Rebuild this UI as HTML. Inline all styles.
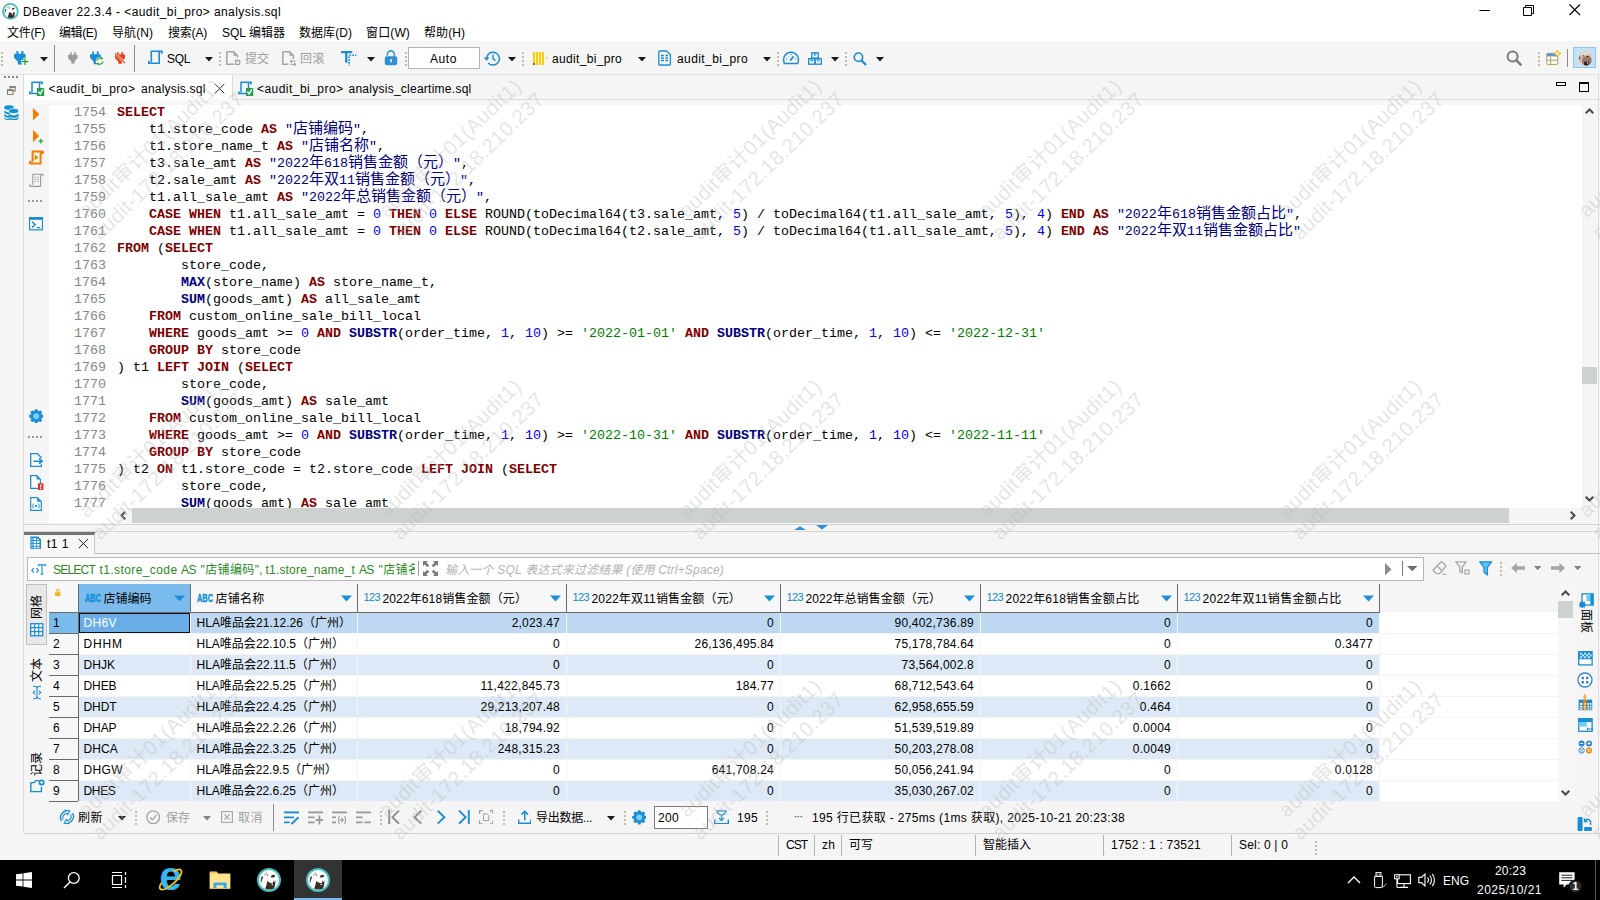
<!DOCTYPE html>
<html lang="zh"><head><meta charset="utf-8"><title>DBeaver</title>
<style>
*{box-sizing:border-box;margin:0;padding:0}
html,body{width:1600px;height:900px;overflow:hidden;background:#fff}
body{font-family:"Liberation Sans","Noto Sans CJK SC",sans-serif;font-size:12px;color:#000;position:relative}
.a{position:absolute;display:block}
.t{position:absolute;white-space:pre;line-height:20px;height:20px}
.c{position:absolute;white-space:pre;font-family:"Liberation Mono","Noto Sans CJK SC",monospace;font-size:13.333px;line-height:20px;height:20px;color:#000}
.c .cj{font-size:15px;line-height:1}
.k{color:#800000;font-weight:bold}
.f{color:#000080;font-weight:bold}
.n{color:#0000ff}
.s{color:#008000}
.q{color:#000080}
.ln{color:#868686}
.vt{width:40px;height:16px;margin-left:-20px;margin-top:-8px;line-height:16px;text-align:center;white-space:nowrap;transform:rotate(-90deg);font-size:12px}
.vtr{width:40px;height:16px;margin-left:-20px;margin-top:-8px;line-height:16px;text-align:center;white-space:nowrap;transform:rotate(90deg);font-size:12px}
.wm{position:absolute;width:300px;height:26px;line-height:26px;font-size:20.5px;text-align:center;white-space:nowrap;color:rgba(188,188,188,.4);transform:rotate(-44deg)}

</style></head>
<body>
<div class="a" style="left:0px;top:41px;width:1600px;height:33px;background:#f5f5f5;"></div>
<div class="a" style="left:0px;top:74px;width:1600px;height:1px;background:#e2e2e2;"></div>
<div class="a" style="left:0px;top:75px;width:1600px;height:785px;background:#f5f5f5;"></div>
<div class="a" style="left:24px;top:75px;width:208px;height:25px;background:#fff;"></div>
<div class="a" style="left:232px;top:99px;width:1368px;height:1px;background:#dadada;"></div>
<div class="a" style="left:23px;top:75px;width:1px;height:758px;background:#dcdcdc;"></div>
<div class="a" style="left:49px;top:105px;width:1533px;height:403px;background:#fff;"></div>
<div class="a" style="left:49px;top:508px;width:68px;height:15px;background:#fff;"></div>
<div class="a" style="left:24px;top:100px;width:1576px;height:4px;background:#f8f8f8;"></div>
<div class="a" style="left:1582px;top:104px;width:16px;height:404px;background:#f5f5f5;"></div>
<div class="a" style="left:1582px;top:367px;width:15px;height:17px;background:#cdd1cf;"></div>
<div class="a" style="left:117px;top:508px;width:1465px;height:15px;background:#f5f5f5;"></div>
<div class="a" style="left:132px;top:508px;width:1377px;height:15px;background:#cdd1cf;"></div>
<div class="a" style="left:1598px;top:75px;width:1px;height:758px;background:#dcdcdc;"></div>
<div class="a" style="left:24px;top:524px;width:1576px;height:1px;background:#d4d4d4;"></div>
<div class="a" style="left:24px;top:531px;width:1576px;height:1px;background:#d4d4d4;"></div>
<div class="t" style="left:23px;top:1.84px;font-size:12px;color:#000;letter-spacing:0.421px;">DBeaver 22.3.4 - &lt;audit_bi_pro&gt; analysis.sql</div>
<svg class="a" style="left:1479px;top:4px;" width="12" height="12" viewBox="0 0 12 12"><path d="M0.5 6.5H11" stroke="#000" stroke-width="1"/></svg>
<svg class="a" style="left:1523px;top:4px;" width="12" height="12" viewBox="0 0 12 12"><path d="M0.5 3.5H8.5V11.5H0.5Z M2.5 3V1.5H10.5V9.5H9" stroke="#000" stroke-width="1" fill="none"/></svg>
<svg class="a" style="left:1569px;top:4px;" width="12" height="12" viewBox="0 0 12 12"><path d="M0.5 0.5L11 11M11 0.5L0.5 11" stroke="#000" stroke-width="1.1"/></svg>
<div class="t" style="left:7px;top:22.84px;font-size:12px;color:#000;letter-spacing:-0.266px;">文件(F)</div>
<div class="t" style="left:59px;top:22.84px;font-size:12px;color:#000;letter-spacing:-0.400px;">编辑(E)</div>
<div class="t" style="left:112px;top:22.84px;font-size:12px;color:#000;letter-spacing:0.066px;">导航(N)</div>
<div class="t" style="left:168px;top:22.84px;font-size:12px;color:#000;letter-spacing:-0.200px;">搜索(A)</div>
<div class="t" style="left:222px;top:22.84px;font-size:12px;color:#000;letter-spacing:0.013px;">SQL 编辑器</div>
<div class="t" style="left:299px;top:22.84px;font-size:12px;color:#000;letter-spacing:0.055px;">数据库(D)</div>
<div class="t" style="left:366px;top:22.84px;font-size:12px;color:#000;letter-spacing:0.134px;">窗口(W)</div>
<div class="t" style="left:424px;top:22.84px;font-size:12px;color:#000;letter-spacing:0.066px;">帮助(H)</div>
<div class="t" style="left:167px;top:48.84px;font-size:12px;color:#000;letter-spacing:-0.339px;">SQL</div>
<div class="t" style="left:245px;top:48.84px;font-size:12px;color:#a0a0a0;letter-spacing:-0.008px;">提交</div>
<div class="t" style="left:300px;top:48.84px;font-size:12px;color:#a0a0a0;letter-spacing:0.492px;">回滚</div>
<div class="a" style="left:408px;top:47px;width:72px;height:22px;background:#fff;border:1px solid #b4b4b4"></div>
<div class="t" style="left:430px;top:48.84px;font-size:12px;color:#000;letter-spacing:0.578px;">Auto</div>
<div class="t" style="left:552px;top:48.84px;font-size:12px;color:#000;letter-spacing:0.328px;">audit_bi_pro</div>
<div class="t" style="left:677px;top:48.84px;font-size:12px;color:#000;letter-spacing:0.411px;">audit_bi_pro</div>
<div class="t" style="left:48.5px;top:78.84px;font-size:12px;color:#000;letter-spacing:0.494px;">&lt;audit_bi_pro&gt;</div>
<div class="t" style="left:141px;top:78.84px;font-size:12px;color:#000;letter-spacing:0.206px;">analysis.sql</div>
<div class="t" style="left:257px;top:78.84px;font-size:12px;color:#000;letter-spacing:0.459px;">&lt;audit_bi_pro&gt;</div>
<div class="t" style="left:348.5px;top:78.84px;font-size:12px;color:#000;letter-spacing:0.255px;">analysis_cleartime.sql</div>
<svg class="a" style="left:213px;top:82px;" width="12" height="12" viewBox="0 0 12 12"><path d="M2 2L11.3 11.3M11.3 2L2 11.3" stroke="#222" stroke-width="1"/></svg>
<div class="a" style="left:1556px;top:82px;width:10px;height:4px;background:transparent;border:1px solid #000"></div>
<div class="a" style="left:1579px;top:82px;width:10px;height:10px;background:transparent;border:1px solid #000;border-top-width:2px"></div>
<div class="a" style="left:49px;top:104px;width:1533px;height:404px;overflow:hidden">
<div class="c" style="left:68px;top:-1px"><span class="k">SELECT</span></div>
<div class="c" style="left:68px;top:16px">    t1.store_code <span class="k">AS</span> <span class="q">"<span class="cj">店铺编码</span>"</span>,</div>
<div class="c" style="left:68px;top:33px">    t1.store_name_t <span class="k">AS</span> <span class="q">"<span class="cj">店铺名称</span>"</span>,</div>
<div class="c" style="left:68px;top:50px">    t3.sale_amt <span class="k">AS</span> <span class="q">"2022<span class="cj">年</span>618<span class="cj">销售金额（元）</span>"</span>,</div>
<div class="c" style="left:68px;top:67px">    t2.sale_amt <span class="k">AS</span> <span class="q">"2022<span class="cj">年双</span>11<span class="cj">销售金额（元）</span>"</span>,</div>
<div class="c" style="left:68px;top:84px">    t1.all_sale_amt <span class="k">AS</span> <span class="q">"2022<span class="cj">年总销售金额（元）</span>"</span>,</div>
<div class="c" style="left:68px;top:101px">    <span class="k">CASE</span> <span class="k">WHEN</span> t1.all_sale_amt = <span class="n">0</span> <span class="k">THEN</span> <span class="n">0</span> <span class="k">ELSE</span> ROUND(toDecimal64(t3.sale_amt, <span class="n">5</span>) / toDecimal64(t1.all_sale_amt, <span class="n">5</span>), <span class="n">4</span>) <span class="k">END</span> <span class="k">AS</span> <span class="q">"2022<span class="cj">年</span>618<span class="cj">销售金额占比</span>"</span>,</div>
<div class="c" style="left:68px;top:118px">    <span class="k">CASE</span> <span class="k">WHEN</span> t1.all_sale_amt = <span class="n">0</span> <span class="k">THEN</span> <span class="n">0</span> <span class="k">ELSE</span> ROUND(toDecimal64(t2.sale_amt, <span class="n">5</span>) / toDecimal64(t1.all_sale_amt, <span class="n">5</span>), <span class="n">4</span>) <span class="k">END</span> <span class="k">AS</span> <span class="q">"2022<span class="cj">年双</span>11<span class="cj">销售金额占比</span>"</span></div>
<div class="c" style="left:68px;top:135px"><span class="k">FROM</span> (<span class="k">SELECT</span></div>
<div class="c" style="left:68px;top:152px">        store_code,</div>
<div class="c" style="left:68px;top:169px">        <span class="f">MAX</span>(store_name) <span class="k">AS</span> store_name_t,</div>
<div class="c" style="left:68px;top:186px">        <span class="f">SUM</span>(goods_amt) <span class="k">AS</span> all_sale_amt</div>
<div class="c" style="left:68px;top:203px">    <span class="k">FROM</span> custom_online_sale_bill_local</div>
<div class="c" style="left:68px;top:220px">    <span class="k">WHERE</span> goods_amt &gt;= <span class="n">0</span> <span class="k">AND</span> <span class="f">SUBSTR</span>(order_time, <span class="n">1</span>, <span class="n">10</span>) &gt;= <span class="s">'2022-01-01'</span> <span class="k">AND</span> <span class="f">SUBSTR</span>(order_time, <span class="n">1</span>, <span class="n">10</span>) &lt;= <span class="s">'2022-12-31'</span></div>
<div class="c" style="left:68px;top:237px">    <span class="k">GROUP</span> <span class="k">BY</span> store_code</div>
<div class="c" style="left:68px;top:254px">) t1 <span class="k">LEFT</span> <span class="k">JOIN</span> (<span class="k">SELECT</span></div>
<div class="c" style="left:68px;top:271px">        store_code,</div>
<div class="c" style="left:68px;top:288px">        <span class="f">SUM</span>(goods_amt) <span class="k">AS</span> sale_amt</div>
<div class="c" style="left:68px;top:305px">    <span class="k">FROM</span> custom_online_sale_bill_local</div>
<div class="c" style="left:68px;top:322px">    <span class="k">WHERE</span> goods_amt &gt;= <span class="n">0</span> <span class="k">AND</span> <span class="f">SUBSTR</span>(order_time, <span class="n">1</span>, <span class="n">10</span>) &gt;= <span class="s">'2022-10-31'</span> <span class="k">AND</span> <span class="f">SUBSTR</span>(order_time, <span class="n">1</span>, <span class="n">10</span>) &lt;= <span class="s">'2022-11-11'</span></div>
<div class="c" style="left:68px;top:339px">    <span class="k">GROUP</span> <span class="k">BY</span> store_code</div>
<div class="c" style="left:68px;top:356px">) t2 <span class="k">ON</span> t1.store_code = t2.store_code <span class="k">LEFT</span> <span class="k">JOIN</span> (<span class="k">SELECT</span></div>
<div class="c" style="left:68px;top:373px">        store_code,</div>
<div class="c" style="left:68px;top:390px">        <span class="f">SUM</span>(goods_amt) <span class="k">AS</span> sale_amt</div>
</div>
<div class="c ln" style="left:74px;top:103px">1754</div>
<div class="c ln" style="left:74px;top:120px">1755</div>
<div class="c ln" style="left:74px;top:137px">1756</div>
<div class="c ln" style="left:74px;top:154px">1757</div>
<div class="c ln" style="left:74px;top:171px">1758</div>
<div class="c ln" style="left:74px;top:188px">1759</div>
<div class="c ln" style="left:74px;top:205px">1760</div>
<div class="c ln" style="left:74px;top:222px">1761</div>
<div class="c ln" style="left:74px;top:239px">1762</div>
<div class="c ln" style="left:74px;top:256px">1763</div>
<div class="c ln" style="left:74px;top:273px">1764</div>
<div class="c ln" style="left:74px;top:290px">1765</div>
<div class="c ln" style="left:74px;top:307px">1766</div>
<div class="c ln" style="left:74px;top:324px">1767</div>
<div class="c ln" style="left:74px;top:341px">1768</div>
<div class="c ln" style="left:74px;top:358px">1769</div>
<div class="c ln" style="left:74px;top:375px">1770</div>
<div class="c ln" style="left:74px;top:392px">1771</div>
<div class="c ln" style="left:74px;top:409px">1772</div>
<div class="c ln" style="left:74px;top:426px">1773</div>
<div class="c ln" style="left:74px;top:443px">1774</div>
<div class="c ln" style="left:74px;top:460px">1775</div>
<div class="c ln" style="left:74px;top:477px">1776</div>
<div class="c ln" style="left:74px;top:494px">1777</div>
<div class="a" style="left:24px;top:532px;width:71px;height:22px;background:#f7f7f7;"></div>
<div class="a" style="left:24px;top:532px;width:71px;height:3px;background:#727774;"></div>
<div class="a" style="left:95px;top:553px;width:1505px;height:1px;background:#bebebe;"></div>
<div class="a" style="left:94px;top:534px;width:1px;height:20px;background:#c8c8c8;"></div>
<div class="t" style="left:47px;top:533.84px;font-size:12px;color:#000;letter-spacing:0.496px;">t1 1</div>
<svg class="a" style="left:78px;top:538px;" width="12" height="12" viewBox="0 0 12 12"><path d="M.8 1L10 10.200M10 1L.8 10.200" stroke="#222" stroke-width="1"/></svg>
<div class="a" style="left:27px;top:557px;width:1397px;height:24px;background:#fff;border:1px solid #b4b8bc"></div>
<div class="t" style="left:53px;top:559.84px;font-size:12px;color:#2a8a1e;letter-spacing:-0.781px;">SELECT</div>
<div class="t" style="left:99.5px;top:559.84px;font-size:12px;color:#2a8a1e;letter-spacing:0.406px;">t1.store_code</div>
<div class="t" style="left:181px;top:559.84px;font-size:12px;color:#2a8a1e;letter-spacing:-0.508px;">AS</div>
<div class="t" style="left:200.5px;top:559.84px;font-size:12px;color:#2a8a1e;letter-spacing:0.377px;">"店铺编码",</div>
<div class="t" style="left:265.5px;top:559.84px;font-size:12px;color:#2a8a1e;letter-spacing:0.185px;">t1.store_name_t</div>
<div class="t" style="left:359px;top:559.84px;font-size:12px;color:#2a8a1e;letter-spacing:-0.758px;">AS</div>
<div class="t" style="left:378.5px;top:559.84px;font-size:12px;color:#2a8a1e;letter-spacing:0.411px;">"店铺</div>
<div class="t" style="left:408px;top:559.84px;font-size:12px;color:#2a8a1e;letter-spacing:5.500px;width:6.5px;overflow:hidden;">名</div>
<div class="t" style="left:445px;top:559.84px;font-size:12px;color:#b2b2b2;letter-spacing:0.187px;font-style:italic;">输入一个 SQL 表达式来过滤结果 (使用 Ctrl+Space)</div>
<div class="a" style="left:26px;top:584px;width:21px;height:61px;background:#e8e8e8;border:1px solid #c0c0c0"></div>
<div class="a vt" style="left:37px;top:607px">网格</div>
<div class="a vt" style="left:37px;top:670px">文本</div>
<div class="a vt" style="left:37px;top:764px">记录</div>
<div class="a vtr" style="left:1585.5px;top:621px">面板</div>
<div class="a" style="left:49px;top:584px;width:1509px;height:217px;background:#fff;"></div>
<div class="a" style="left:49px;top:584px;width:1509px;height:28px;background:#f7f7f7;"></div>
<div class="a" style="left:1380px;top:584px;width:178px;height:28px;background:#f5f5f5;"></div>
<div class="a" style="left:79px;top:584px;width:111px;height:28px;background:#7cbbee;"></div>
<div class="a" style="left:79px;top:613px;width:1301px;height:20px;background:#bdd8f0;"></div>
<div class="a" style="left:49px;top:613px;width:29px;height:20px;background:#7cbbee;"></div>
<div class="a" style="left:49px;top:633px;width:29px;height:1px;background:#6a6a6a;"></div>
<div class="a" style="left:79px;top:633px;width:1479px;height:1px;background:#f4f4f4;"></div>
<div class="a" style="left:49px;top:634px;width:29px;height:20px;background:#f7f7f7;"></div>
<div class="a" style="left:49px;top:654px;width:29px;height:1px;background:#6a6a6a;"></div>
<div class="a" style="left:79px;top:654px;width:1479px;height:1px;background:#f4f4f4;"></div>
<div class="a" style="left:79px;top:655px;width:1301px;height:20px;background:#dde9f6;"></div>
<div class="a" style="left:49px;top:655px;width:29px;height:20px;background:#f7f7f7;"></div>
<div class="a" style="left:49px;top:675px;width:29px;height:1px;background:#6a6a6a;"></div>
<div class="a" style="left:79px;top:675px;width:1479px;height:1px;background:#f4f4f4;"></div>
<div class="a" style="left:49px;top:676px;width:29px;height:20px;background:#f7f7f7;"></div>
<div class="a" style="left:49px;top:696px;width:29px;height:1px;background:#6a6a6a;"></div>
<div class="a" style="left:79px;top:696px;width:1479px;height:1px;background:#f4f4f4;"></div>
<div class="a" style="left:79px;top:697px;width:1301px;height:20px;background:#dde9f6;"></div>
<div class="a" style="left:49px;top:697px;width:29px;height:20px;background:#f7f7f7;"></div>
<div class="a" style="left:49px;top:717px;width:29px;height:1px;background:#6a6a6a;"></div>
<div class="a" style="left:79px;top:717px;width:1479px;height:1px;background:#f4f4f4;"></div>
<div class="a" style="left:49px;top:718px;width:29px;height:20px;background:#f7f7f7;"></div>
<div class="a" style="left:49px;top:738px;width:29px;height:1px;background:#6a6a6a;"></div>
<div class="a" style="left:79px;top:738px;width:1479px;height:1px;background:#f4f4f4;"></div>
<div class="a" style="left:79px;top:739px;width:1301px;height:20px;background:#dde9f6;"></div>
<div class="a" style="left:49px;top:739px;width:29px;height:20px;background:#f7f7f7;"></div>
<div class="a" style="left:49px;top:759px;width:29px;height:1px;background:#6a6a6a;"></div>
<div class="a" style="left:79px;top:759px;width:1479px;height:1px;background:#f4f4f4;"></div>
<div class="a" style="left:49px;top:760px;width:29px;height:20px;background:#f7f7f7;"></div>
<div class="a" style="left:49px;top:780px;width:29px;height:1px;background:#6a6a6a;"></div>
<div class="a" style="left:79px;top:780px;width:1479px;height:1px;background:#f4f4f4;"></div>
<div class="a" style="left:79px;top:781px;width:1301px;height:20px;background:#dde9f6;"></div>
<div class="a" style="left:49px;top:781px;width:29px;height:20px;background:#f7f7f7;"></div>
<div class="a" style="left:49px;top:801px;width:29px;height:1px;background:#6a6a6a;"></div>
<div class="a" style="left:79px;top:801px;width:1479px;height:1px;background:#f4f4f4;"></div>
<div class="a" style="left:190px;top:613px;width:1px;height:188px;background:#f4f4f4;"></div>
<div class="a" style="left:357px;top:613px;width:1px;height:188px;background:#f4f4f4;"></div>
<div class="a" style="left:566px;top:613px;width:1px;height:188px;background:#f4f4f4;"></div>
<div class="a" style="left:780px;top:613px;width:1px;height:188px;background:#f4f4f4;"></div>
<div class="a" style="left:980px;top:613px;width:1px;height:188px;background:#f4f4f4;"></div>
<div class="a" style="left:1177px;top:613px;width:1px;height:188px;background:#f4f4f4;"></div>
<div class="a" style="left:1379px;top:613px;width:1px;height:188px;background:#f4f4f4;"></div>
<div class="a" style="left:190px;top:584px;width:1px;height:29px;background:#6a6a6a;"></div>
<div class="a" style="left:357px;top:584px;width:1px;height:29px;background:#6a6a6a;"></div>
<div class="a" style="left:566px;top:584px;width:1px;height:29px;background:#6a6a6a;"></div>
<div class="a" style="left:780px;top:584px;width:1px;height:29px;background:#6a6a6a;"></div>
<div class="a" style="left:980px;top:584px;width:1px;height:29px;background:#6a6a6a;"></div>
<div class="a" style="left:1177px;top:584px;width:1px;height:29px;background:#6a6a6a;"></div>
<div class="a" style="left:1379px;top:584px;width:1px;height:29px;background:#6a6a6a;"></div>
<div class="a" style="left:78px;top:584px;width:1px;height:217px;background:#6a6a6a;"></div>
<div class="a" style="left:49px;top:612px;width:1331px;height:1px;background:#6a6a6a;"></div>
<div class="a" style="left:79px;top:613px;width:111px;height:20px;background:#6aade6;border:1px solid #111"></div>
<div class="t" style="left:53px;top:612.84px;font-size:12px;color:#000;letter-spacing:0.312px;">1</div>
<div class="t" style="left:83.5px;top:612.84px;font-size:12px;color:#fff;letter-spacing:0.371px;">DH6V</div>
<div class="t" style="left:196.5px;top:612.84px;font-size:12px;color:#000;letter-spacing:0.024px;">HLA唯品会21.12.26（广州）</div>
<div class="t" style="left:511.72px;top:612.84px;font-size:12px;color:#000;letter-spacing:0.195px;">2,023.47</div>
<div class="t" style="left:766.97px;top:612.84px;font-size:12px;color:#000;letter-spacing:0.342px;">0</div>
<div class="t" style="left:894.55px;top:612.84px;font-size:12px;color:#000;letter-spacing:0.208px;">90,402,736.89</div>
<div class="t" style="left:1163.97px;top:612.84px;font-size:12px;color:#000;letter-spacing:0.342px;">0</div>
<div class="t" style="left:1365.97px;top:612.84px;font-size:12px;color:#000;letter-spacing:0.342px;">0</div>
<div class="t" style="left:53px;top:633.84px;font-size:12px;color:#000;letter-spacing:0.312px;">2</div>
<div class="t" style="left:83.5px;top:633.84px;font-size:12px;color:#000;letter-spacing:0.875px;">DHHM</div>
<div class="t" style="left:196.5px;top:633.84px;font-size:12px;color:#000;letter-spacing:0.006px;">HLA唯品会22.10.5（广州）</div>
<div class="t" style="left:552.97px;top:633.84px;font-size:12px;color:#000;letter-spacing:0.342px;">0</div>
<div class="t" style="left:694.55px;top:633.84px;font-size:12px;color:#000;letter-spacing:0.208px;">26,136,495.84</div>
<div class="t" style="left:894.55px;top:633.84px;font-size:12px;color:#000;letter-spacing:0.208px;">75,178,784.64</div>
<div class="t" style="left:1163.97px;top:633.84px;font-size:12px;color:#000;letter-spacing:0.342px;">0</div>
<div class="t" style="left:1334.8px;top:633.84px;font-size:12px;color:#000;letter-spacing:0.249px;">0.3477</div>
<div class="t" style="left:53px;top:654.84px;font-size:12px;color:#000;letter-spacing:0.312px;">3</div>
<div class="t" style="left:83.5px;top:654.84px;font-size:12px;color:#000;letter-spacing:0.039px;">DHJK</div>
<div class="t" style="left:196.5px;top:654.84px;font-size:12px;color:#000;letter-spacing:0.059px;">HLA唯品会22.11.5（广州）</div>
<div class="t" style="left:552.97px;top:654.84px;font-size:12px;color:#000;letter-spacing:0.342px;">0</div>
<div class="t" style="left:766.97px;top:654.84px;font-size:12px;color:#000;letter-spacing:0.342px;">0</div>
<div class="t" style="left:901.58px;top:654.84px;font-size:12px;color:#000;letter-spacing:0.195px;">73,564,002.8</div>
<div class="t" style="left:1163.97px;top:654.84px;font-size:12px;color:#000;letter-spacing:0.342px;">0</div>
<div class="t" style="left:1365.97px;top:654.84px;font-size:12px;color:#000;letter-spacing:0.342px;">0</div>
<div class="t" style="left:53px;top:675.84px;font-size:12px;color:#000;letter-spacing:0.312px;">4</div>
<div class="t" style="left:83.5px;top:675.84px;font-size:12px;color:#000;letter-spacing:-0.086px;">DHEB</div>
<div class="t" style="left:196.5px;top:675.84px;font-size:12px;color:#000;letter-spacing:0.006px;">HLA唯品会22.5.25（广州）</div>
<div class="t" style="left:480.55px;top:675.84px;font-size:12px;color:#000;letter-spacing:0.276px;">11,422,845.73</div>
<div class="t" style="left:735.8px;top:675.84px;font-size:12px;color:#000;letter-spacing:0.249px;">184.77</div>
<div class="t" style="left:894.55px;top:675.84px;font-size:12px;color:#000;letter-spacing:0.208px;">68,712,543.64</div>
<div class="t" style="left:1132.8px;top:675.84px;font-size:12px;color:#000;letter-spacing:0.249px;">0.1662</div>
<div class="t" style="left:1365.97px;top:675.84px;font-size:12px;color:#000;letter-spacing:0.342px;">0</div>
<div class="t" style="left:53px;top:696.84px;font-size:12px;color:#000;letter-spacing:0.312px;">5</div>
<div class="t" style="left:83.5px;top:696.84px;font-size:12px;color:#000;letter-spacing:-0.082px;">DHDT</div>
<div class="t" style="left:196.5px;top:696.84px;font-size:12px;color:#000;letter-spacing:0.006px;">HLA唯品会22.4.25（广州）</div>
<div class="t" style="left:480.55px;top:696.84px;font-size:12px;color:#000;letter-spacing:0.208px;">29,213,207.48</div>
<div class="t" style="left:766.97px;top:696.84px;font-size:12px;color:#000;letter-spacing:0.342px;">0</div>
<div class="t" style="left:894.55px;top:696.84px;font-size:12px;color:#000;letter-spacing:0.208px;">62,958,655.59</div>
<div class="t" style="left:1139.83px;top:696.84px;font-size:12px;color:#000;letter-spacing:0.228px;">0.464</div>
<div class="t" style="left:1365.97px;top:696.84px;font-size:12px;color:#000;letter-spacing:0.342px;">0</div>
<div class="t" style="left:53px;top:717.84px;font-size:12px;color:#000;letter-spacing:0.312px;">6</div>
<div class="t" style="left:83.5px;top:717.84px;font-size:12px;color:#000;letter-spacing:-0.086px;">DHAP</div>
<div class="t" style="left:196.5px;top:717.84px;font-size:12px;color:#000;letter-spacing:0.006px;">HLA唯品会22.2.26（广州）</div>
<div class="t" style="left:504.69px;top:717.84px;font-size:12px;color:#000;letter-spacing:0.213px;">18,794.92</div>
<div class="t" style="left:766.97px;top:717.84px;font-size:12px;color:#000;letter-spacing:0.342px;">0</div>
<div class="t" style="left:894.55px;top:717.84px;font-size:12px;color:#000;letter-spacing:0.208px;">51,539,519.89</div>
<div class="t" style="left:1132.8px;top:717.84px;font-size:12px;color:#000;letter-spacing:0.249px;">0.0004</div>
<div class="t" style="left:1365.97px;top:717.84px;font-size:12px;color:#000;letter-spacing:0.342px;">0</div>
<div class="t" style="left:53px;top:738.84px;font-size:12px;color:#000;letter-spacing:0.312px;">7</div>
<div class="t" style="left:83.5px;top:738.84px;font-size:12px;color:#000;letter-spacing:0.121px;">DHCA</div>
<div class="t" style="left:196.5px;top:738.84px;font-size:12px;color:#000;letter-spacing:0.006px;">HLA唯品会22.3.25（广州）</div>
<div class="t" style="left:497.66px;top:738.84px;font-size:12px;color:#000;letter-spacing:0.228px;">248,315.23</div>
<div class="t" style="left:766.97px;top:738.84px;font-size:12px;color:#000;letter-spacing:0.342px;">0</div>
<div class="t" style="left:894.55px;top:738.84px;font-size:12px;color:#000;letter-spacing:0.208px;">50,203,278.08</div>
<div class="t" style="left:1132.8px;top:738.84px;font-size:12px;color:#000;letter-spacing:0.249px;">0.0049</div>
<div class="t" style="left:1365.97px;top:738.84px;font-size:12px;color:#000;letter-spacing:0.342px;">0</div>
<div class="t" style="left:53px;top:759.84px;font-size:12px;color:#000;letter-spacing:0.312px;">8</div>
<div class="t" style="left:83.5px;top:759.84px;font-size:12px;color:#000;letter-spacing:0.375px;">DHGW</div>
<div class="t" style="left:196.5px;top:759.84px;font-size:12px;color:#000;letter-spacing:-0.014px;">HLA唯品会22.9.5（广州）</div>
<div class="t" style="left:552.97px;top:759.84px;font-size:12px;color:#000;letter-spacing:0.342px;">0</div>
<div class="t" style="left:711.66px;top:759.84px;font-size:12px;color:#000;letter-spacing:0.228px;">641,708.24</div>
<div class="t" style="left:894.55px;top:759.84px;font-size:12px;color:#000;letter-spacing:0.208px;">50,056,241.94</div>
<div class="t" style="left:1163.97px;top:759.84px;font-size:12px;color:#000;letter-spacing:0.342px;">0</div>
<div class="t" style="left:1334.8px;top:759.84px;font-size:12px;color:#000;letter-spacing:0.249px;">0.0128</div>
<div class="t" style="left:53px;top:780.84px;font-size:12px;color:#000;letter-spacing:0.312px;">9</div>
<div class="t" style="left:83.5px;top:780.84px;font-size:12px;color:#000;letter-spacing:-0.336px;">DHES</div>
<div class="t" style="left:196.5px;top:780.84px;font-size:12px;color:#000;letter-spacing:0.006px;">HLA唯品会22.6.25（广州）</div>
<div class="t" style="left:552.97px;top:780.84px;font-size:12px;color:#000;letter-spacing:0.342px;">0</div>
<div class="t" style="left:766.97px;top:780.84px;font-size:12px;color:#000;letter-spacing:0.342px;">0</div>
<div class="t" style="left:894.55px;top:780.84px;font-size:12px;color:#000;letter-spacing:0.208px;">35,030,267.02</div>
<div class="t" style="left:1163.97px;top:780.84px;font-size:12px;color:#000;letter-spacing:0.342px;">0</div>
<div class="t" style="left:1365.97px;top:780.84px;font-size:12px;color:#000;letter-spacing:0.342px;">0</div>
<div class="t" style="left:103.5px;top:588.84px;font-size:12px;color:#000;">店铺编码</div>
<div class="t" style="left:85px;top:589.05px;font-size:8.5px;color:#1490d8;transform:scale(0.869,1.250);transform-origin:0 12.95px;font-weight:bold;-webkit-text-stroke:.35px #1490d8;">ABC</div>
<svg class="a" style="left:174px;top:595px;" width="11" height="7" viewBox="0 0 11 7"><path d="M0 0.5H11L5.5 6.5Z" fill="#1e8fd6"/></svg>
<div class="t" style="left:215.5px;top:588.84px;font-size:12px;color:#000;letter-spacing:0.246px;">店铺名称</div>
<div class="t" style="left:197px;top:589.05px;font-size:8.5px;color:#1490d8;transform:scale(0.869,1.250);transform-origin:0 12.95px;font-weight:bold;-webkit-text-stroke:.35px #1490d8;">ABC</div>
<svg class="a" style="left:341px;top:595px;" width="11" height="7" viewBox="0 0 11 7"><path d="M0 0.5H11L5.5 6.5Z" fill="#1e8fd6"/></svg>
<div class="t" style="left:382.5px;top:588.84px;font-size:12px;color:#000;letter-spacing:0.119px;">2022年618销售金额（元）</div>
<div class="t" style="left:363.5px;top:587.19px;font-size:11px;color:#1189d2;letter-spacing:-0.620px;">123</div>
<svg class="a" style="left:550px;top:595px;" width="11" height="7" viewBox="0 0 11 7"><path d="M0 0.5H11L5.5 6.5Z" fill="#1e8fd6"/></svg>
<div class="t" style="left:591.5px;top:588.84px;font-size:12px;color:#000;letter-spacing:0.156px;">2022年双11销售金额（元）</div>
<div class="t" style="left:572.5px;top:587.19px;font-size:11px;color:#1189d2;letter-spacing:-0.620px;">123</div>
<svg class="a" style="left:764px;top:595px;" width="11" height="7" viewBox="0 0 11 7"><path d="M0 0.5H11L5.5 6.5Z" fill="#1e8fd6"/></svg>
<div class="t" style="left:805.5px;top:588.84px;font-size:12px;color:#000;letter-spacing:0.061px;">2022年总销售金额（元）</div>
<div class="t" style="left:786.5px;top:587.19px;font-size:11px;color:#1189d2;letter-spacing:-0.620px;">123</div>
<svg class="a" style="left:964px;top:595px;" width="11" height="7" viewBox="0 0 11 7"><path d="M0 0.5H11L5.5 6.5Z" fill="#1e8fd6"/></svg>
<div class="t" style="left:1005.5px;top:588.84px;font-size:12px;color:#000;letter-spacing:0.234px;">2022年618销售金额占比</div>
<div class="t" style="left:986.5px;top:587.19px;font-size:11px;color:#1189d2;letter-spacing:-0.620px;">123</div>
<svg class="a" style="left:1161px;top:595px;" width="11" height="7" viewBox="0 0 11 7"><path d="M0 0.5H11L5.5 6.5Z" fill="#1e8fd6"/></svg>
<div class="t" style="left:1202.5px;top:588.84px;font-size:12px;color:#000;letter-spacing:0.275px;">2022年双11销售金额占比</div>
<div class="t" style="left:1183.5px;top:587.19px;font-size:11px;color:#1189d2;letter-spacing:-0.620px;">123</div>
<svg class="a" style="left:1363px;top:595px;" width="11" height="7" viewBox="0 0 11 7"><path d="M0 0.5H11L5.5 6.5Z" fill="#1e8fd6"/></svg>
<svg class="a" style="left:53.5px;top:588.5px;" width="7.5" height="7.5" viewBox="0 0 9 11"><path d="M2.2 5V3.2a2.3 2.3 0 0 1 4.6 0V5" stroke="#f5b31a" stroke-width="1.5" fill="none"/><rect x="0.5" y="4.6" width="8" height="6.2" rx="0.8" fill="#f5b31a"/></svg>
<div class="a" style="left:1558px;top:584px;width:16px;height:217px;background:#f7f7f7;"></div>
<div class="a" style="left:1558px;top:601px;width:15px;height:17px;background:#cdd1cf;"></div>
<svg class="a" style="left:1561px;top:590px;" width="9" height="6" viewBox="0 0 9 6"><path d="M0.7 5.3L4.5 1.5L8.3 5.3" stroke="#4a4a4a" stroke-width="2" fill="none"/></svg>
<svg class="a" style="left:1561px;top:790px;" width="9" height="6" viewBox="0 0 9 6"><path d="M0.7 0.7L4.5 4.5L8.3 0.7" stroke="#4a4a4a" stroke-width="2" fill="none"/></svg>
<svg class="a" style="left:1585px;top:108px;" width="9" height="6" viewBox="0 0 9 6"><path d="M0.7 5.3L4.5 1.5L8.3 5.3" stroke="#4a4a4a" stroke-width="2" fill="none"/></svg>
<svg class="a" style="left:1585px;top:496px;" width="9" height="6" viewBox="0 0 9 6"><path d="M0.7 0.7L4.5 4.5L8.3 0.7" stroke="#4a4a4a" stroke-width="2" fill="none"/></svg>
<svg class="a" style="left:120px;top:511px;" width="6" height="9" viewBox="0 0 6 9"><path d="M5.3 0.7L1.5 4.5L5.3 8.3" stroke="#4a4a4a" stroke-width="2" fill="none"/></svg>
<svg class="a" style="left:1570px;top:511px;" width="6" height="9" viewBox="0 0 6 9"><path d="M0.7 0.7L4.5 4.5L0.7 8.3" stroke="#4a4a4a" stroke-width="2" fill="none"/></svg>
<svg class="a" style="left:794px;top:525px;" width="12" height="5" viewBox="0 0 12 5"><path d="M0 5L6 1.2L12 5Z" fill="#2f8fd8"/></svg>
<svg class="a" style="left:816px;top:525px;" width="12" height="5" viewBox="0 0 12 5"><path d="M0 0H12L6 4.5Z" fill="#2f8fd8"/></svg>
<div class="a" style="left:24px;top:833px;width:1576px;height:1px;background:#d4d4d4;"></div>
<div class="t" style="left:78px;top:807.84px;font-size:12px;color:#000;letter-spacing:0.492px;">刷新</div>
<div class="t" style="left:166px;top:807.84px;font-size:12px;color:#a0a0a0;letter-spacing:-0.008px;">保存</div>
<div class="t" style="left:238px;top:807.84px;font-size:12px;color:#a0a0a0;letter-spacing:0.492px;">取消</div>
<div class="a" style="left:273px;top:804px;width:1px;height:27px;background:#8c8c8c;"></div>
<div class="t" style="left:536px;top:807.84px;font-size:12px;color:#000;letter-spacing:-0.288px;">导出数据...</div>
<div class="a" style="left:654px;top:806px;width:54px;height:23px;background:#fff;border:1px solid #7a7a7a"></div>
<div class="t" style="left:658px;top:807.84px;font-size:12px;color:#000;letter-spacing:0.323px;">200</div>
<div class="t" style="left:737px;top:807.84px;font-size:12px;color:#000;letter-spacing:0.323px;">195</div>
<div class="t" style="left:793.5px;top:806.34px;font-size:12px;color:#444;letter-spacing:-1.167px;">···</div>
<div class="t" style="left:812px;top:807.84px;font-size:12px;color:#000;letter-spacing:0.338px;">195 行已获取 - 275ms (1ms 获取), 2025-10-21 20:23:38</div>
<div class="a" style="left:778px;top:835px;width:1px;height:21px;background:#b4b4b4;"></div>
<div class="a" style="left:814px;top:835px;width:1px;height:21px;background:#b4b4b4;"></div>
<div class="a" style="left:841px;top:835px;width:1px;height:21px;background:#b4b4b4;"></div>
<div class="a" style="left:975px;top:835px;width:1px;height:21px;background:#b4b4b4;"></div>
<div class="a" style="left:1103px;top:835px;width:1px;height:21px;background:#b4b4b4;"></div>
<div class="a" style="left:1231px;top:835px;width:1px;height:21px;background:#b4b4b4;"></div>
<div class="t" style="left:786px;top:834.84px;font-size:12px;color:#000;letter-spacing:-1.000px;">CST</div>
<div class="t" style="left:822px;top:834.84px;font-size:12px;color:#000;letter-spacing:0.156px;">zh</div>
<div class="t" style="left:849px;top:834.84px;font-size:12px;color:#000;letter-spacing:-0.008px;">可写</div>
<div class="t" style="left:983px;top:834.84px;font-size:12px;color:#000;">智能插入</div>
<div class="t" style="left:1111px;top:834.84px;font-size:12px;color:#000;letter-spacing:0.203px;">1752 : 1 : 73521</div>
<div class="t" style="left:1239px;top:834.84px;font-size:12px;color:#000;letter-spacing:0.184px;">Sel: 0 | 0</div>
<div class="a" style="left:0px;top:860px;width:1600px;height:40px;background:#000;"></div>
<div class="a" style="left:294px;top:860px;width:48px;height:40px;background:#333;"></div>
<div class="a" style="left:294px;top:898px;width:48px;height:2px;background:#76b9ed;"></div>
<div class="t" style="left:1443px;top:870.84px;font-size:12px;color:#fff;letter-spacing:-0.005px;">ENG</div>
<div class="t" style="left:1495px;top:860.84px;font-size:12px;color:#fff;letter-spacing:0.194px;">20:23</div>
<div class="t" style="left:1477px;top:879.84px;font-size:12px;color:#fff;letter-spacing:0.494px;">2025/10/21</div>
<div class="a" style="left:1595px;top:860px;width:1px;height:40px;background:#555;"></div>
<svg class="a" style="left:16px;top:872px;" width="16" height="16" viewBox="0 0 16 16"><path d="M0 2.3L6.6 1.4V7.6H0ZM7.4 1.3L16 0V7.6H7.4ZM0 8.4H6.6V14.6L0 13.7ZM7.4 8.4H16V16L7.4 14.7Z" fill="#fff"/></svg>
<svg class="a" style="left:63px;top:871px;" width="18" height="18" viewBox="0 0 18 18"><circle cx="10.8" cy="7" r="5.4" stroke="#fff" stroke-width="1.3" fill="none"/><path d="M7 11L1 17" stroke="#fff" stroke-width="1.4"/></svg>
<svg class="a" style="left:111px;top:872px;" width="18" height="16" viewBox="0 0 18 16"><path d="M1 0.5H11M1 15.5H11M1.5 3.5H10.5V12.5H1.5ZM14.5 0V3M14.5 5V11M14.5 13V16" stroke="#fff" stroke-width="1.2" fill="none"/></svg>
<div class="a" style="left:1px;top:52px;width:2px;height:2px;background:#c6bca6;"></div>
<div class="a" style="left:1px;top:56px;width:2px;height:2px;background:#c6bca6;"></div>
<div class="a" style="left:1px;top:60px;width:2px;height:2px;background:#c6bca6;"></div>
<div class="a" style="left:1px;top:64px;width:2px;height:2px;background:#c6bca6;"></div>
<svg class="a" style="left:13.6px;top:51.2px;" width="15.6" height="15.6" viewBox="0 0 16.1379 16.0588"><path d="M2.5 0h2v2.900h-2zM7.500 0h2.200v2.900h-2.200zM1 2.900h10a1 1 0 0 1 1 1V7L8.200 11.100V14H4V11.100L0 7V3.900a1 1 0 0 1 1-1z" fill="#1b8dd6"/><path d="M11.400 7v8M7.400 11h8" stroke="#f5f5f5" stroke-width="3.200"/><path d="M11.400 7.500v7M7.900 11h7" stroke="#1aa51a" stroke-width="1.250"/></svg>
<svg class="a" style="left:40px;top:57px;" width="8" height="4.5" viewBox="0 0 8 4.5"><path d="M0 0H8L4 4.5Z" fill="#1a1a1a"/></svg>
<div class="a" style="left:54px;top:45px;width:1px;height:27px;background:#8c8c8c;"></div>
<svg class="a" style="left:67.6px;top:52px;" width="13.6" height="13.8" viewBox="0 0 17 16.3729"><path d="M2.5 0h2v2.900h-2zM7.500 0h2.200v2.900h-2.200zM1 2.900h10a1 1 0 0 1 1 1V7L8.200 11.100V14H4V11.100L0 7V3.900a1 1 0 0 1 1-1z" fill="#9c9c9c"/></svg>
<svg class="a" style="left:89.6px;top:51.2px;" width="14.8" height="15.6" viewBox="0 0 16.4444 16.0588"><path d="M2.5 0h2v2.900h-2zM7.500 0h2.200v2.900h-2.200zM1 2.900h10a1 1 0 0 1 1 1V7L8.200 11.100V14H4V11.100L0 7V3.900a1 1 0 0 1 1-1z" fill="#1b8dd6"/><circle cx="11" cy="10.6" r="4.6" fill="#f5f5f5"/><path d="M7.6 10.2a3.5 3.5 0 0 1 5.8-2.2M14.4 11a3.5 3.5 0 0 1-5.8 2.2" stroke="#1aa51a" stroke-width="1.3" fill="none"/><path d="M12.6 5.8l2.3 2.4-3.2.6zM9.4 15.4l-2.3-2.4 3.2-.6z" fill="#1aa51a"/></svg>
<svg class="a" style="left:114.8px;top:52px;" width="14" height="14" viewBox="0 0 16.8 16.3333"><path d="M2.5 0h2v2.900h-2zM7.500 0h2.200v2.900h-2.200zM1 2.900h10a1 1 0 0 1 1 1V7L8.200 11.100V14H4V11.100L0 7V3.900a1 1 0 0 1 1-1z" fill="#f03a17"/><path d="M-.6 .8L12.4 13.4" stroke="#f5f5f5" stroke-width="2.6"/><path d="M-.4 1.2L12.2 13.2" stroke="#f03a17" stroke-width="1.2"/></svg>
<div class="a" style="left:134px;top:45px;width:1px;height:27px;background:#8c8c8c;"></div>
<svg class="a" style="left:147.5px;top:50.3px;" width="16" height="16" viewBox="0 0 16 16"><path d="M3.3 11.4V1.3H13.2M13.6 1.3c.9.3.9 1.6-.2 1.7M11.2 1.6V13.3H1M.8 13.3c-.9-.3-.9-1.6.2-1.7" stroke="#1b8dd6" stroke-width="1.6" fill="none" stroke-linecap="round"/></svg>
<svg class="a" style="left:204.5px;top:57px;" width="8" height="4.5" viewBox="0 0 8 4.5"><path d="M0 0H8L4 4.5Z" fill="#1a1a1a"/></svg>
<div class="a" style="left:218.5px;top:52px;width:2px;height:2px;background:#c6bca6;"></div>
<div class="a" style="left:218.5px;top:56px;width:2px;height:2px;background:#c6bca6;"></div>
<div class="a" style="left:218.5px;top:60px;width:2px;height:2px;background:#c6bca6;"></div>
<div class="a" style="left:218.5px;top:64px;width:2px;height:2px;background:#c6bca6;"></div>
<svg class="a" style="left:226px;top:51px;" width="15" height="15" viewBox="0 0 15 15"><path d="M.8 .8H7.6L11.4 4.6V6.5M11.4 10.5v.5M.8 .8V13.2H8" stroke="#a4a4a4" stroke-width="1.5" fill="none"/><path d="M7.4 .8V4.8H11.4" fill="#a4a4a4"/><rect x="9.6" y="9.4" width="4" height="4" stroke="#a4a4a4" stroke-width="1.3" fill="none"/></svg>
<svg class="a" style="left:282px;top:51px;" width="15" height="15" viewBox="0 0 15 15"><path d="M.8 .8H7.6L11.4 4.6V8M.8 .8V13.2H6.5" stroke="#a4a4a4" stroke-width="1.5" fill="none"/><path d="M7.4 .8V4.8H11.4" fill="#a4a4a4"/><path d="M8.2 10.2H13.6M8.2 10.2l1.6-1.5M8.2 10.2l1.6 1.5M8.6 13.4H14M14 13.4l-1.6-1.5M14 13.4l-1.6 1.5" stroke="#a4a4a4" stroke-width="1.1" fill="none"/></svg>
<svg class="a" style="left:341px;top:51px;" width="16" height="15" viewBox="0 0 16 15"><path d="M0 1.2H11.2M5.3 1.2V11.8" stroke="#1b8dd6" stroke-width="2.3" fill="none"/><path d="M8.4 4.2H15.4" stroke="#1b8dd6" stroke-width="1.6" stroke-dasharray="1.7 1.1" fill="none"/><path d="M8.2 5.4V14.5" stroke="#1b8dd6" stroke-width="1.7" stroke-dasharray="1.7 1.1" fill="none"/></svg>
<svg class="a" style="left:366.8px;top:57px;" width="8" height="4.5" viewBox="0 0 8 4.5"><path d="M0 0H8L4 4.5Z" fill="#1a1a1a"/></svg>
<svg class="a" style="left:384px;top:50px;" width="14" height="16" viewBox="0 0 14 16"><path d="M3.400 5.800V4.400a3.500 3.500 0 0 1 7 0V7" stroke="#3b97dc" stroke-width="1.600" fill="none"/><rect x=".8" y="6.2" width="12.4" height="9" rx="2" fill="#2f8fd6"/><path d="M6.3 9h1.6v1.6l-.3 2h-1z" fill="#fff"/></svg>
<div class="a" style="left:404.5px;top:52px;width:2px;height:2px;background:#c6bca6;"></div>
<div class="a" style="left:404.5px;top:56px;width:2px;height:2px;background:#c6bca6;"></div>
<div class="a" style="left:404.5px;top:60px;width:2px;height:2px;background:#c6bca6;"></div>
<div class="a" style="left:404.5px;top:64px;width:2px;height:2px;background:#c6bca6;"></div>
<svg class="a" style="left:483px;top:50px;" width="18" height="16" viewBox="0 0 18 16"><path d="M3.6 8.4A6.4 6.4 0 1 1 5.2 12.9" stroke="#1b8dd6" stroke-width="1.5" fill="none"/><path d="M.6 7.4H6.6L3.6 10.8Z" fill="#1b8dd6"/><path d="M10 4.6V8.6L12.4 10.6" stroke="#1b8dd6" stroke-width="1.4" fill="none"/></svg>
<svg class="a" style="left:507.8px;top:56.5px;" width="8" height="4.5" viewBox="0 0 8 4.5"><path d="M0 0H8L4 4.5Z" fill="#1a1a1a"/></svg>
<div class="a" style="left:521.5px;top:52px;width:2px;height:2px;background:#c6bca6;"></div>
<div class="a" style="left:521.5px;top:56px;width:2px;height:2px;background:#c6bca6;"></div>
<div class="a" style="left:521.5px;top:60px;width:2px;height:2px;background:#c6bca6;"></div>
<div class="a" style="left:521.5px;top:64px;width:2px;height:2px;background:#c6bca6;"></div>
<div class="a" style="left:533px;top:51.5px;width:1.6px;height:13px;background:#ffcc00;"></div>
<div class="a" style="left:536px;top:51.5px;width:1.6px;height:13px;background:#ffcc00;"></div>
<div class="a" style="left:539px;top:51.5px;width:1.6px;height:13px;background:#ffcc00;"></div>
<div class="a" style="left:542px;top:51.5px;width:1.6px;height:13px;background:#ffcc00;"></div>
<div class="a" style="left:533px;top:63px;width:1.6px;height:1.5px;background:#f03a17;"></div>
<div class="a" style="left:545.8px;top:57px;width:1.4px;height:2.4px;background:#ffcc00;"></div>
<svg class="a" style="left:637.5px;top:56.5px;" width="8" height="4.5" viewBox="0 0 8 4.5"><path d="M0 0H8L4 4.5Z" fill="#1a1a1a"/></svg>
<svg class="a" style="left:658px;top:50px;" width="14" height="16" viewBox="0 0 14 16"><path d="M1.6 1H8.6L12.4 4.6V14.2a.8 .8 0 0 1-.8 .8H1.6a.8 .8 0 0 1-.8-.8V1.8a.8 .8 0 0 1 .8-.8z" stroke="#1b8dd6" stroke-width="1.3" fill="none"/><path d="M3 5.4h3M3 8h3M3 10.6h3M7.4 5.4h2.6M7.4 8h2.6M7.4 10.6h2.6" stroke="#1b8dd6" stroke-width="1.5"/></svg>
<svg class="a" style="left:762.5px;top:57px;" width="8" height="4.5" viewBox="0 0 8 4.5"><path d="M0 0H8L4 4.5Z" fill="#1a1a1a"/></svg>
<div class="a" style="left:776.5px;top:52px;width:2px;height:2px;background:#c6bca6;"></div>
<div class="a" style="left:776.5px;top:56px;width:2px;height:2px;background:#c6bca6;"></div>
<div class="a" style="left:776.5px;top:60px;width:2px;height:2px;background:#c6bca6;"></div>
<div class="a" style="left:776.5px;top:64px;width:2px;height:2px;background:#c6bca6;"></div>
<svg class="a" style="left:782px;top:51px;" width="18" height="15" viewBox="0 0 18 15"><path d="M2.2 11.6A7.4 7.4 0 1 1 15.8 11.6M1.6 12.6H16.4" stroke="#1b8dd6" stroke-width="1.5" fill="none"/><path d="M8.2 9.6L11.6 5.2" stroke="#1b8dd6" stroke-width="1.8"/><path d="M4 8h1.2M9 3v1.2M12.8 8h1.2M5.4 4.6l.8.8" stroke="#1b8dd6" stroke-width="1"/></svg>
<svg class="a" style="left:807.5px;top:51.5px;" width="14" height="13" viewBox="0 0 14 13"><rect x="3.8" y=".7" width="6.4" height="5.4" stroke="#1b8dd6" stroke-width="1.3" fill="none"/><rect x=".7" y="6.6" width="6.2" height="5.6" stroke="#1b8dd6" stroke-width="1.3" fill="none"/><rect x="7.1" y="6.6" width="6.2" height="5.6" stroke="#1b8dd6" stroke-width="1.3" fill="none"/><path d="M6.2 .8v2.4h1.6V.8M3 6.8v2.2h1.6V6.8M9.4 6.8v2.2H11V6.8" stroke="#1b8dd6" stroke-width=".9" fill="none"/></svg>
<svg class="a" style="left:830.5px;top:57px;" width="8" height="4.5" viewBox="0 0 8 4.5"><path d="M0 0H8L4 4.5Z" fill="#1a1a1a"/></svg>
<div class="a" style="left:844.5px;top:52px;width:2px;height:2px;background:#c6bca6;"></div>
<div class="a" style="left:844.5px;top:56px;width:2px;height:2px;background:#c6bca6;"></div>
<div class="a" style="left:844.5px;top:60px;width:2px;height:2px;background:#c6bca6;"></div>
<div class="a" style="left:844.5px;top:64px;width:2px;height:2px;background:#c6bca6;"></div>
<svg class="a" style="left:853px;top:51.5px;" width="15" height="14" viewBox="0 0 15 14"><circle cx="5.4" cy="5.2" r="4.2" stroke="#1b8dd6" stroke-width="1.7" fill="none"/><path d="M8.4 8.4L13 13" stroke="#1b8dd6" stroke-width="2.3"/></svg>
<svg class="a" style="left:875.5px;top:57px;" width="8" height="4.5" viewBox="0 0 8 4.5"><path d="M0 0H8L4 4.5Z" fill="#1a1a1a"/></svg>
<svg class="a" style="left:1505px;top:49px;" width="20" height="20" viewBox="0 0 20 20"><circle cx="7.6" cy="7.6" r="5" stroke="#7a7a7a" stroke-width="2" fill="none"/><path d="M11.2 11.2L16.4 16.4" stroke="#7a7a7a" stroke-width="2.4"/></svg>
<div class="a" style="left:1538px;top:52px;width:2px;height:2px;background:#c6bca6;"></div>
<div class="a" style="left:1538px;top:56px;width:2px;height:2px;background:#c6bca6;"></div>
<div class="a" style="left:1538px;top:60px;width:2px;height:2px;background:#c6bca6;"></div>
<div class="a" style="left:1538px;top:64px;width:2px;height:2px;background:#c6bca6;"></div>
<svg class="a" style="left:1546px;top:50px;" width="16" height="16" viewBox="0 0 16 16"><rect x=".8" y="3.4" width="11" height="11" rx="1" fill="#fff" stroke="#b09a5a" stroke-width="1"/><rect x=".8" y="3.4" width="11" height="3" fill="#5b9bd5"/><path d="M4.6 6.4V14.4M.8 10.2H11.8" stroke="#b09a5a" stroke-width="1"/><path d="M11.2 .4l1.2 2.2 2.4 .8-2.4 1.2-1.2 2.4-1.2-2.4-2.4-1.2 2.4-.8z" fill="#fff7d0" stroke="#e0a800" stroke-width=".9"/></svg>
<div class="a" style="left:1567px;top:49px;width:1px;height:18px;background:#8c8c8c;"></div>
<div class="a" style="left:1573px;top:47px;width:23px;height:21px;background:#c5e0f7;border:1px solid #8dc6f2"></div>
<div class="a" style="left:4px;top:76px;width:2px;height:2px;background:#8f897b;"></div>
<div class="a" style="left:8px;top:76px;width:2px;height:2px;background:#8f897b;"></div>
<div class="a" style="left:12px;top:76px;width:2px;height:2px;background:#8f897b;"></div>
<div class="a" style="left:16px;top:76px;width:2px;height:2px;background:#8f897b;"></div>
<svg class="a" style="left:7px;top:86px;" width="9" height="9" viewBox="0 0 9 9"><path d="M3 3V.9H8.2V5.2H6.4" stroke="#857b6a" stroke-width="1" fill="none"/><path d="M2.6 .9H8.6" stroke="#857b6a" stroke-width="1.8"/><rect x=".5" y="4" width="5.6" height="4.4" stroke="#857b6a" stroke-width="1" fill="none"/><path d="M0 4.2H6.6" stroke="#857b6a" stroke-width="1.8"/></svg>
<svg class="a" style="left:3.5px;top:104.5px;" width="15" height="15" viewBox="0 0 15 15"><g fill="#1090d5"><ellipse cx="5" cy="2.6" rx="4.8" ry="2.3"/><path d="M.2 5.2c1 1.8 4 2.2 5.4 2v2C3.6 9.4 1 8.800 .2 7.200zM.2 8.700c1 1.800 4 2.200 5.400 2v2C3.600 12.900 1 12.300 .2 10.700zM.2 12.200c1 1.400 3.500 2 5.400 1.800v1C3.600 15.400 1 14.600 .2 13.400z"/></g><g fill="#1090d5" stroke="#f5f5f5" stroke-width=".7"><ellipse cx="9.7" cy="6" rx="5" ry="2.500"/></g><g fill="#1090d5"><path d="M4.700 8.600c1.500 2.400 8.500 2.400 10 0v2.300c-1.500 2.400-8.500 2.400-10 0zM4.700 11.900c1.500 2.400 8.500 2.400 10 0v1.700c-1.500 2.400-8.500 2.400-10 0z"/></g></svg>
<svg class="a" style="left:29px;top:80.5px;" width="16" height="16" viewBox="0 0 16 16"><path d="M3 10.800V1.200H12.400M12.800 1.200c.8 .3 .8 1.400-.2 1.500M10.500 1.500V7M8 12.600H1M.8 12.600c-.8-.3-.8-1.400 .2-1.500" stroke="#1b8dd6" stroke-width="1.500" fill="none" stroke-linecap="round"/><rect x="8" y="7" width="7.200" height="8" fill="#1fa04a"/><path d="M9.400 10.600l1.800 2.400 2.600-4.600" stroke="#fff" stroke-width="1.500" fill="none"/></svg>
<svg class="a" style="left:237.5px;top:80.5px;" width="16" height="16" viewBox="0 0 16 16"><path d="M3 10.800V1.200H12.400M12.800 1.200c.8 .3 .8 1.400-.2 1.500M10.500 1.500V7M8 12.600H1M.8 12.600c-.8-.3-.8-1.400 .2-1.500" stroke="#1b8dd6" stroke-width="1.500" fill="none" stroke-linecap="round"/><rect x="8" y="7" width="7.200" height="8" fill="#1fa04a"/><path d="M9.400 10.600l1.800 2.400 2.600-4.600" stroke="#fff" stroke-width="1.500" fill="none"/></svg>
<div class="a" style="left:232px;top:75px;width:1px;height:25px;background:#dadada;"></div>
<svg class="a" style="left:33px;top:107.8px;" width="7" height="12.5" viewBox="0 0 7 12.5"><path d="M0 0L6.400 6.200L0 12.400Z" fill="#f57c00"/></svg>
<svg class="a" style="left:32.8px;top:129.8px;" width="11" height="14" viewBox="0 0 11 14"><path d="M0 0L6.200 6.100L0 12.200Z" fill="#f57c00"/><path d="M7.800 8.800v4.600M5.500 11.100h4.600" stroke="#2ca02c" stroke-width="1.200"/></svg>
<svg class="a" style="left:28.5px;top:150.3px;" width="16" height="16" viewBox="0 0 16 16"><path d="M3.600 11V1.500H13M13.500 1.500c.9 .3 .9 1.600-.2 1.700M11.600 1.800V13.400H1.600M1.200 13.400c-.9-.3-.9-1.600 .2-1.700" stroke="#f57c00" stroke-width="2" fill="none" stroke-linecap="round"/><path d="M5.800 4.500L9.600 7.400L5.800 10.300Z" fill="#f57c00"/></svg>
<svg class="a" style="left:28.5px;top:172.5px;" width="16" height="16" viewBox="0 0 16 16"><path d="M3.800 11.400V1.300H13.200M13.600 1.300c.8 .3 .8 1.400-.2 1.500M11.600 1.600V13.400H1.600M1.200 13.400c-.8-.3-.8-1.400 .2-1.500" stroke="#9a9a9a" stroke-width="1.100" fill="none" stroke-linecap="round"/><path d="M5.400 4.200h1.800M8 4.200h2M5.400 6.400h1.800M8 6.400h2M5.400 8.600h1.800M8 8.600h2" stroke="#a8a8a8" stroke-width="1"/></svg>
<div class="a" style="left:28px;top:200px;width:2px;height:2px;background:#a09a88;"></div>
<div class="a" style="left:32px;top:200px;width:2px;height:2px;background:#a09a88;"></div>
<div class="a" style="left:36px;top:200px;width:2px;height:2px;background:#a09a88;"></div>
<div class="a" style="left:40px;top:200px;width:2px;height:2px;background:#a09a88;"></div>
<svg class="a" style="left:29px;top:217px;" width="14" height="13.5" viewBox="0 0 14 13.5"><rect x=".6" y=".6" width="12.800" height="12.200" fill="#fff" stroke="#1b8dd6" stroke-width="1.200"/><path d="M0 1.400H14" stroke="#1b8dd6" stroke-width="2.800"/><path d="M3 4.800L6.200 7.600L3 10.400" stroke="#1b8dd6" stroke-width="1.400" fill="none"/><path d="M7.600 10.600H11.400" stroke="#1b8dd6" stroke-width="1.300"/></svg>
<svg class="a" style="left:28.8px;top:408.8px;" width="14.5" height="14.5" viewBox="0 0 14.5 14.5"><path d="M14.36 5.84L14.36 8.66L12.88 8.65L12.22 10.24L13.28 11.28L11.28 13.28L10.24 12.22L8.65 12.88L8.66 14.36L5.84 14.36L5.85 12.88L4.26 12.22L3.22 13.28L1.22 11.28L2.28 10.24L1.62 8.65L0.14 8.66L0.14 5.84L1.62 5.85L2.28 4.26L1.22 3.22L3.22 1.22L4.26 2.28L5.85 1.62L5.84 0.14L8.66 0.14L8.65 1.62L10.24 2.28L11.28 1.22L13.28 3.22L12.22 4.26L12.88 5.85Z" fill="#1b8dd6"/><circle cx="7.250" cy="7.250" r="2.900" fill="#7fd0f5"/></svg>
<div class="a" style="left:28px;top:436px;width:2px;height:2px;background:#a09a88;"></div>
<div class="a" style="left:32px;top:436px;width:2px;height:2px;background:#a09a88;"></div>
<div class="a" style="left:36px;top:436px;width:2px;height:2px;background:#a09a88;"></div>
<div class="a" style="left:40px;top:436px;width:2px;height:2px;background:#a09a88;"></div>
<svg class="a" style="left:30px;top:453px;" width="13" height="14.5" viewBox="0 0 13 14.5"><path d="M.7 .7H7.400L11.300 4.600V13.300H.7Z" stroke="#1b8dd6" stroke-width="1.300" fill="#fff"/><path d="M3.400 8.200H11.800M9.200 5.600l2.800 2.600-2.800 2.600" stroke="#1b8dd6" stroke-width="1.400" fill="none"/><rect x="10.500" y="5.400" width="2" height="1.500" fill="#fff"/><rect x="10.500" y="9.600" width="2" height="1.600" fill="#fff"/><path d="M9.200 5.600l2.800 2.600-2.800 2.600" stroke="#1b8dd6" stroke-width="1.400" fill="none"/></svg>
<svg class="a" style="left:30px;top:475.3px;" width="14" height="15.5" viewBox="0 0 14 15.5"><path d="M.7 .7H6.800L10.400 4.400V13.300H.7Z" stroke="#1b8dd6" stroke-width="1.300" fill="#fff"/><path d="M6.600 .7V4.600H10.400" fill="#1b8dd6"/><rect x="8" y="8.300" width="5.400" height="6.600" fill="#f0281e"/><path d="M10.700 9.400v3" stroke="#fff" stroke-width="1.300"/><rect x="10.050" y="13" width="1.300" height="1.100" fill="#fff"/></svg>
<svg class="a" style="left:30px;top:497.2px;" width="13" height="14.5" viewBox="0 0 13 14.5"><path d="M.7 .7H7.400L11.300 4.600V13.300H.7Z" stroke="#1b8dd6" stroke-width="1.200" fill="#fff"/><path d="M7.200 .7V4.800H11.300" fill="#1b8dd6"/><path d="M3.600 6.600c-1 1.400-1 3.400 0 4.800M8.400 6.600c1 1.400 1 3.400 0 4.800M4.900 7.800l2.200 2.400M7.100 7.800l-2.200 2.400" stroke="#1b8dd6" stroke-width=".95" fill="none"/></svg>
<svg class="a" style="left:30px;top:536px;" width="11.5" height="13.5" viewBox="0 0 11.5 13.5"><path d="M.4 .4H8.200L11 3.200V13H.4Z" fill="#1b8dd6"/><g fill="#fff"><rect x="3.600" y="2.100" width="2.400" height="2"/><rect x="6.800" y="2.900" width="2.200" height="1.200"/><rect x="3.600" y="5" width="2.400" height="2"/><rect x="6.800" y="5" width="2.600" height="2"/><rect x="3.600" y="7.900" width="2.400" height="2"/><rect x="6.800" y="7.900" width="2.600" height="2"/><rect x="3.600" y="10.800" width="2.400" height="1.500"/><rect x="6.800" y="10.800" width="2.600" height="1.500"/></g><g fill="#7fd3f5"><rect x="1.300" y="2.100" width="1.500" height="2"/><rect x="1.300" y="5" width="1.500" height="2"/><rect x="1.300" y="7.900" width="1.500" height="2"/><rect x="1.300" y="10.800" width="1.500" height="1.500"/></g></svg>
<svg class="a" style="left:31px;top:563.5px;" width="16" height="11" viewBox="0 0 16 11"><path d="M2.800 4.200L.8 6.400l2 2.200M5.400 4.200l2 2.200-2 2.200" stroke="#1b8dd6" stroke-width="1.200" fill="none"/><path d="M7.400 2.200V.9H14.600V2.200M11 .9V10M9.600 10.100H12.400" stroke="#1b8dd6" stroke-width="1.100" fill="none"/></svg>
<div class="a" style="left:418px;top:561px;width:1px;height:15px;background:#9a9a9a;"></div>
<svg class="a" style="left:423px;top:561px;" width="15" height="15" viewBox="0 0 15 15"><g><path d="M0 0H5L3.400 1.600L6.200 4.400L4.400 6.200L1.600 3.400L0 5Z" fill="#7a7a7a"/></g><g transform="translate(15,0) scale(-1,1)"><path d="M0 0H5L3.400 1.600L6.200 4.400L4.400 6.200L1.600 3.400L0 5Z" fill="#7a7a7a"/></g><g transform="translate(0,15) scale(1,-1)"><path d="M0 0H5L3.400 1.600L6.200 4.400L4.400 6.200L1.600 3.400L0 5Z" fill="#7a7a7a"/></g><g transform="translate(15,15) scale(-1,-1)"><path d="M0 0H5L3.400 1.600L6.200 4.400L4.400 6.200L1.600 3.400L0 5Z" fill="#7a7a7a"/></g></svg>
<svg class="a" style="left:1384.5px;top:563px;" width="7" height="12.5" viewBox="0 0 7 12.5"><path d="M0 0L6.600 6.200L0 12.400Z" fill="#8c8c8c"/></svg>
<div class="a" style="left:1402px;top:561px;width:1px;height:15px;background:#7a7a7a;"></div>
<svg class="a" style="left:1406.8px;top:566px;" width="10.6" height="5.2" viewBox="0 0 10.6 5.2"><path d="M0 0H10.600L5.300 5.200Z" fill="#6e6e6e"/></svg>
<svg class="a" style="left:1432px;top:560px;" width="16" height="16" viewBox="0 0 16 16"><path d="M1.600 9.600L8.600 2.200a1.300 1.300 0 0 1 1.800 0l3 3a1.300 1.300 0 0 1 0 1.800L7.400 13.600H4.600L1.600 11a1 1 0 0 1 0-1.400zM5.200 6L10 10.800" stroke="#a8a8a8" stroke-width="1.400" fill="none"/><path d="M10.200 14.200H14.200" stroke="#a8a8a8" stroke-width="1.200"/></svg>
<svg class="a" style="left:1455px;top:560.5px;" width="16" height="15" viewBox="0 0 16 15"><path d="M.8 .8H11.200L7.200 6V12L4.800 10.400V6Z" stroke="#a8a8a8" stroke-width="1.300" fill="none" stroke-linejoin="round"/><rect x="10" y="9" width="4" height="4" stroke="#a8a8a8" stroke-width="1.200" fill="#f5f5f5"/></svg>
<svg class="a" style="left:1479px;top:560.5px;" width="14" height="15.5" viewBox="0 0 14 15.5"><path d="M.8 .8H12.600L8.400 6.400V14L5 11.200V6.400Z" stroke="#1b8dd6" stroke-width="1.300" fill="#55c6f2" stroke-linejoin="round"/></svg>
<div class="a" style="left:1499.5px;top:562px;width:2px;height:2px;background:#c6bca6;"></div>
<div class="a" style="left:1499.5px;top:566px;width:2px;height:2px;background:#c6bca6;"></div>
<div class="a" style="left:1499.5px;top:570px;width:2px;height:2px;background:#c6bca6;"></div>
<div class="a" style="left:1499.5px;top:574px;width:2px;height:2px;background:#c6bca6;"></div>
<svg class="a" style="left:1510.7px;top:563px;" width="14.4" height="10" viewBox="0 0 14.4 10"><path d="M0 5L6 0V3.200H14.400V6.800H6V10Z" fill="#a6a6a6"/></svg>
<svg class="a" style="left:1534px;top:565.7px;" width="7.4" height="4.2" viewBox="0 0 7.4 4.2"><path d="M0 0H7.400L3.700 4.200Z" fill="#808080"/></svg>
<svg class="a" style="left:1551px;top:563px;" width="14.4" height="10" viewBox="0 0 14.4 10"><g transform="translate(14.400,0) scale(-1,1)"><path d="M0 5L6 0V3.200H14.400V6.800H6V10Z" fill="#a6a6a6"/></g></svg>
<svg class="a" style="left:1573.8px;top:565.7px;" width="7.4" height="4.2" viewBox="0 0 7.4 4.2"><path d="M0 0H7.400L3.700 4.200Z" fill="#808080"/></svg>
<svg class="a" style="left:30px;top:623px;" width="13.5" height="13.5" viewBox="0 0 13.5 13.5"><rect x=".7" y=".7" width="12.100" height="12.100" fill="#fff" stroke="#1b8dd6" stroke-width="1.300"/><path d="M.7 4.700H12.800M.7 8.700H12.800M4.700 .7V12.800M8.700 .7V12.800" stroke="#1b8dd6" stroke-width="1.200"/></svg>
<svg class="a" style="left:32px;top:685px;" width="10" height="15" viewBox="0 0 10 15"><path d="M1 1.200H2.400M7.600 1.200H9M2.400 1.200C4.400 1.200 5 2 5 3.400V11.600C5 13 4.400 13.800 2.400 13.800M7.600 1.200C5.600 1.200 5 2 5 3.400M5 11.600C5 13 5.600 13.800 7.600 13.800M1 13.800H2.400M7.600 13.800H9" stroke="#1b8dd6" stroke-width="1.100" fill="none"/><path d="M3.200 5.600L1.200 7.500l2 1.900M6.800 5.600l2 1.900-2 1.900" stroke="#1b8dd6" stroke-width="1.100" fill="none"/></svg>
<svg class="a" style="left:29.5px;top:777.5px;" width="15" height="15" viewBox="0 0 15 15"><path d="M.8 4.600H4.200L5.600 2.600H9M.8 4.600V13.600H11.400V8.800" stroke="#1b8dd6" stroke-width="1.400" fill="none"/><circle cx="11.600" cy="4.400" r="3" fill="#1b8dd6"/><path d="M11.600 2.800v3.200M10 4.400h3.200" stroke="#fff" stroke-width=".9"/></svg>
<svg class="a" style="left:1579px;top:592.5px;" width="15" height="15.5" viewBox="0 0 15 15.5"><rect x="3" y=".8" width="11.200" height="11.200" fill="#fff" stroke="#1b8dd6" stroke-width="1.300"/><rect x="7.400" y=".8" width="6.800" height="7.400" fill="#6ccff5"/><path d="M10.900 .8V12" stroke="#1b8dd6" stroke-width="0"/><rect x="11.400" y=".8" width="3" height="11.400" fill="#1b8dd6"/><circle cx="3.400" cy="11.600" r="2.900" fill="#1b8dd6"/><circle cx="3.400" cy="11.600" r="1.100" fill="#fff"/><path d="M3.400 7.800v7.600M-.4 11.600h7.600M.7 8.900l5.400 5.400M6.100 8.900L.7 14.300" stroke="#1b8dd6" stroke-width="1.100"/></svg>
<svg class="a" style="left:1577.5px;top:650.5px;" width="15" height="15" viewBox="0 0 15 15"><rect x=".7" y=".7" width="13.400" height="13.200" fill="#fff" stroke="#1b8dd6" stroke-width="1.300"/><rect x=".7" y=".7" width="13.400" height="7.600" fill="#1b8dd6"/><g fill="#cfeefc"><rect x="2" y="1.800" width="2" height="1.800"/><rect x="6" y="1.800" width="2" height="1.800"/><rect x="10" y="1.800" width="2" height="1.800"/><rect x="4" y="3.600" width="2" height="1.800"/><rect x="8" y="3.600" width="2" height="1.800"/><rect x="12" y="3.600" width="1.600" height="1.800"/><rect x="2" y="5.400" width="2" height="1.800"/><rect x="6" y="5.400" width="2" height="1.800"/><rect x="10" y="5.400" width="2" height="1.800"/></g></svg>
<svg class="a" style="left:1577px;top:672px;" width="16" height="16" viewBox="0 0 16 16"><circle cx="8" cy="8" r="7" stroke="#2a82d0" stroke-width="1.300" fill="#fff"/><g fill="#2a82d0"><rect x="4.600" y="4.800" width="2.400" height="2.400" rx=".6"/><rect x="9" y="4.800" width="2.400" height="2.400" rx=".6"/><rect x="4.600" y="9" width="2.400" height="2.400" rx=".6"/><rect x="9" y="9" width="2.400" height="2.400" rx=".6"/></g></svg>
<svg class="a" style="left:1577.5px;top:694px;" width="15" height="17" viewBox="0 0 15 17"><rect x=".6" y="5.600" width="13.600" height="10.600" fill="#1b8dd6"/><g fill="#fff"><rect x="1.800" y="9" width="2.600" height="1.800"/><rect x="9.400" y="9" width="1.800" height="1.800"/><rect x="12" y="9" width="1.400" height="1.800"/><rect x="1.800" y="11.800" width="2.600" height="1.800"/><rect x="9.400" y="11.800" width="1.800" height="1.800"/><rect x="12" y="11.800" width="1.400" height="1.800"/><rect x="1.800" y="14.400" width="2.600" height="1.200"/><rect x="9.400" y="14.400" width="1.800" height="1.200"/><rect x="12" y="14.400" width="1.400" height="1.200"/></g><rect x="5.200" y="5.600" width="3.400" height="10.600" fill="#f57c00"/><g fill="#ffe0b0"><rect x="6" y="9" width="1.800" height="1.800"/><rect x="6" y="11.800" width="1.800" height="1.800"/><rect x="6" y="14.400" width="1.800" height="1.200"/></g><path d="M6.900 0V4.200M5.200 2.600L6.900 4.400L8.600 2.600" stroke="#f57c00" stroke-width="1" fill="none"/></svg>
<svg class="a" style="left:1577.5px;top:717.5px;" width="15" height="15" viewBox="0 0 15 15"><rect x=".7" y=".7" width="13.400" height="12.600" fill="#fff" stroke="#1b8dd6" stroke-width="1.300"/><rect x=".7" y=".7" width="13.400" height="3.400" fill="#1b8dd6"/><rect x=".7" y="4" width="8" height="4.600" fill="#6ccff5"/><path d="M9.600 11H14.600M9.600 9.400V12.600M14.400 9.400V12.600" stroke="#1b8dd6" stroke-width="1.100"/><rect x="9" y="8.600" width="6" height="5" fill="none"/></svg>
<svg class="a" style="left:1577.5px;top:739.5px;" width="15" height="14" viewBox="0 0 15 14"><circle cx="3.600" cy="3.400" r="3" fill="#2a82d0"/><circle cx="11" cy="3.400" r="3" fill="#2a82d0"/><circle cx="3.600" cy="10.400" r="2.700" fill="#fff" stroke="#2a82d0" stroke-width="1"/><circle cx="11" cy="10.400" r="3" fill="#f57c00"/><path d="M2 3.400H5.200M9.400 3.400H12.600M11 1.800V5M2.400 9.200L4.800 11.600M4.800 9.200L2.400 11.600" stroke="#fff" stroke-width=".9"/><path d="M2.400 9.200L4.800 11.600M4.800 9.200L2.400 11.600" stroke="#2a82d0" stroke-width=".9"/><path d="M9.400 9.600H12.600M9.400 11.200H12.600" stroke="#fff" stroke-width=".9"/></svg>
<svg class="a" style="left:1577px;top:815px;" width="16" height="17" viewBox="0 0 16 17"><rect x=".6" y="2" width="5" height="14" rx="1.200" fill="#1b8dd6"/><rect x="7" y="12" width="8" height="4" rx="1.200" fill="#1b8dd6"/><path d="M7.600 6.400C9 3.600 12 3.400 13.600 6.400" stroke="#1b8dd6" stroke-width="1.400" fill="none"/><path d="M6.800 2.600V7.200H11.200Z" fill="#1b8dd6"/><path d="M13.600 6V10" stroke="#1b8dd6" stroke-width="1.400"/></svg>
<svg class="a" style="left:59px;top:808.5px;" width="16" height="16" viewBox="0 0 16 16"><g transform="rotate(-38 8 8)"><path d="M2.400 7.600A5.600 4.600 0 0 1 11.600 4.200" stroke="#1b8dd6" stroke-width="3.600" fill="none"/><path d="M10.200 .6L15 4.800L9.400 7.400Z" fill="#1b8dd6"/><path d="M13.600 8.400A5.600 4.600 0 0 1 4.400 11.800" stroke="#1b8dd6" stroke-width="3.600" fill="none"/><path d="M5.800 15.400L1 11.200L6.600 8.600Z" fill="#1b8dd6"/><path d="M2.600 7.200A5.400 4.400 0 0 1 11.400 4.200M13.400 8.800A5.400 4.400 0 0 1 4.600 11.800" stroke="#f5f5f5" stroke-width="1.200" fill="none"/><path d="M11 2.600L13 4.600L10.800 5.600ZM5 13.400L3 11.400L5.200 10.400Z" fill="#f5f5f5"/></g></svg>
<svg class="a" style="left:117.8px;top:816px;" width="8" height="4.5" viewBox="0 0 8 4.5"><path d="M0 0H8L4 4.5Z" fill="#1a1a1a"/></svg>
<div class="a" style="left:134.5px;top:811px;width:2px;height:2px;background:#c6bca6;"></div>
<div class="a" style="left:134.5px;top:815px;width:2px;height:2px;background:#c6bca6;"></div>
<div class="a" style="left:134.5px;top:819px;width:2px;height:2px;background:#c6bca6;"></div>
<div class="a" style="left:134.5px;top:823px;width:2px;height:2px;background:#c6bca6;"></div>
<svg class="a" style="left:146px;top:810px;" width="14.4" height="14.4" viewBox="0 0 14.4 14.4"><circle cx="7.200" cy="7.200" r="6.400" stroke="#a4a4a4" stroke-width="1.300" fill="none"/><path d="M4 7.400L6.400 9.800L10.600 4.800" stroke="#a4a4a4" stroke-width="1.300" fill="none"/></svg>
<svg class="a" style="left:203.3px;top:816px;" width="8" height="4.5" viewBox="0 0 8 4.5"><path d="M0 0H8L4 4.5Z" fill="#808080"/></svg>
<svg class="a" style="left:221px;top:811px;" width="12" height="12" viewBox="0 0 12 12"><rect x=".6" y=".6" width="10.800" height="10.800" stroke="#a4a4a4" stroke-width="1.100" fill="none"/><path d="M3.400 3.400L8.600 8.600M8.600 3.400L3.400 8.600" stroke="#a4a4a4" stroke-width="1.100"/></svg>
<svg class="a" style="left:283.8px;top:810.6px;" width="15.4" height="14" viewBox="0 0 15.4 14"><path d="M0 1.400H15" stroke="#1b8dd6" stroke-width="1.900"/><path d="M0 6.400H10M0 11.400H5.600" stroke="#1b8dd6" stroke-width="1.900"/><path d="M7.400 13L14.600 6.200" stroke="#1b8dd6" stroke-width="2"/></svg>
<svg class="a" style="left:307.7px;top:810.6px;" width="15.4" height="14" viewBox="0 0 15.4 14"><path d="M0 1.400H15" stroke="#9c9c9c" stroke-width="1.900"/><path d="M0 6.400H6.600M0 11.400H6.600" stroke="#9c9c9c" stroke-width="1.900"/><path d="M11.400 4.600V13.400M7.600 9H15.200" stroke="#9c9c9c" stroke-width="1.800"/></svg>
<svg class="a" style="left:331.5px;top:810.6px;" width="15.4" height="14" viewBox="0 0 15.4 14"><path d="M0 1.400H15" stroke="#9c9c9c" stroke-width="1.900"/><path d="M0 6.400H4M0 11.400H4" stroke="#9c9c9c" stroke-width="1.900"/><path d="M7.400 5.200c-1.400 1.800-1.400 6 0 7.800M12.600 5.200c1.400 1.800 1.400 6 0 7.800M10 6.600V11.600M7.600 9.100H12.400" stroke="#9c9c9c" stroke-width="1.100" fill="none"/></svg>
<svg class="a" style="left:355.8px;top:810.6px;" width="15.4" height="14" viewBox="0 0 15.4 14"><path d="M0 1.400H15" stroke="#9c9c9c" stroke-width="1.900"/><path d="M0 6.400H6.600M0 11.400H6.600M8.400 11.400H15" stroke="#9c9c9c" stroke-width="1.900"/></svg>
<div class="a" style="left:379.5px;top:811px;width:2px;height:2px;background:#c6bca6;"></div>
<div class="a" style="left:379.5px;top:815px;width:2px;height:2px;background:#c6bca6;"></div>
<div class="a" style="left:379.5px;top:819px;width:2px;height:2px;background:#c6bca6;"></div>
<div class="a" style="left:379.5px;top:823px;width:2px;height:2px;background:#c6bca6;"></div>
<svg class="a" style="left:387.5px;top:810px;" width="12" height="14.4" viewBox="0 0 12 14.4"><path d="M1.200 0V14.400" stroke="#8c8c8c" stroke-width="1.900"/><path d="M11 .6L4.400 7.200L11 13.800" stroke="#8c8c8c" stroke-width="1.900" fill="none"/></svg>
<svg class="a" style="left:412.5px;top:810px;" width="9" height="14.4" viewBox="0 0 9 14.4"><path d="M8.200 .8L1.600 7.200L8.200 13.600" stroke="#8c8c8c" stroke-width="1.900" fill="none"/></svg>
<svg class="a" style="left:437px;top:810px;" width="9" height="14.4" viewBox="0 0 9 14.4"><path d="M.8 .8L7.400 7.200L.8 13.600" stroke="#1b8dd6" stroke-width="1.900" fill="none"/></svg>
<svg class="a" style="left:457.5px;top:810px;" width="12" height="14.4" viewBox="0 0 12 14.4"><path d="M10.800 0V14.400" stroke="#1b8dd6" stroke-width="1.900"/><path d="M1 .6L7.600 7.200L1 13.800" stroke="#1b8dd6" stroke-width="1.900" fill="none"/></svg>
<svg class="a" style="left:479px;top:810px;" width="14.4" height="14.4" viewBox="0 0 14.4 14.4"><path d="M3.600 .6H.6V3.800M10.800 .6H13.800V3.800M3.600 13.800H.6V10.600M10.800 13.800H13.800V10.600" stroke="#9c9c9c" stroke-width="1.200" fill="none"/><path d="M4.600 3.800H8L9.800 5.600V10.600H4.600Z" stroke="#9c9c9c" stroke-width="1" fill="none"/></svg>
<div class="a" style="left:502.5px;top:811px;width:2px;height:2px;background:#c6bca6;"></div>
<div class="a" style="left:502.5px;top:815px;width:2px;height:2px;background:#c6bca6;"></div>
<div class="a" style="left:502.5px;top:819px;width:2px;height:2px;background:#c6bca6;"></div>
<div class="a" style="left:502.5px;top:823px;width:2px;height:2px;background:#c6bca6;"></div>
<svg class="a" style="left:517.5px;top:810px;" width="13.5" height="14" viewBox="0 0 13.5 14"><path d="M.7 9.400V13.300H12.800V9.400" stroke="#1b8dd6" stroke-width="1.400" fill="none"/><path d="M6.750 10.400V1.400M3.400 4.600L6.750 1.200L10.100 4.600" stroke="#1b8dd6" stroke-width="1.500" fill="none"/></svg>
<svg class="a" style="left:607.4px;top:816px;" width="8" height="4.5" viewBox="0 0 8 4.5"><path d="M0 0H8L4 4.5Z" fill="#1a1a1a"/></svg>
<div class="a" style="left:624px;top:811px;width:2px;height:2px;background:#c6bca6;"></div>
<div class="a" style="left:624px;top:815px;width:2px;height:2px;background:#c6bca6;"></div>
<div class="a" style="left:624px;top:819px;width:2px;height:2px;background:#c6bca6;"></div>
<div class="a" style="left:624px;top:823px;width:2px;height:2px;background:#c6bca6;"></div>
<svg class="a" style="left:631.6px;top:810px;" width="14.6" height="14.6" viewBox="0 0 14.5 14.5"><path d="M14.36 5.84L14.36 8.66L12.88 8.65L12.22 10.24L13.28 11.28L11.28 13.28L10.24 12.22L8.65 12.88L8.66 14.36L5.84 14.36L5.85 12.88L4.26 12.22L3.22 13.28L1.22 11.28L2.28 10.24L1.62 8.65L0.14 8.66L0.14 5.84L1.62 5.85L2.28 4.26L1.22 3.22L3.22 1.22L4.26 2.28L5.85 1.62L5.84 0.14L8.66 0.14L8.65 1.62L10.24 2.28L11.28 1.22L13.28 3.22L12.22 4.26L12.88 5.85Z" fill="#1b8dd6"/><circle cx="7.250" cy="7.250" r="2.900" fill="#7fd0f5"/></svg>
<svg class="a" style="left:714.4px;top:810px;" width="15" height="14.4" viewBox="0 0 15 14.4"><path d="M.7 9.400V13.600H14.300V9.400" stroke="#1b8dd6" stroke-width="1.400" fill="none"/><path d="M2.600 .8H12.400M2.600 .8C3.600 3.600 5.600 4.800 7.500 5M12.400 .8C11.400 3.600 9.400 4.800 7.500 5M7.500 5V10.400M5 8L7.500 10.600L10 8" stroke="#1b8dd6" stroke-width="1.200" fill="none"/></svg>
<div class="a" style="left:765.5px;top:811px;width:2px;height:2px;background:#c6bca6;"></div>
<div class="a" style="left:765.5px;top:815px;width:2px;height:2px;background:#c6bca6;"></div>
<div class="a" style="left:765.5px;top:819px;width:2px;height:2px;background:#c6bca6;"></div>
<div class="a" style="left:765.5px;top:823px;width:2px;height:2px;background:#c6bca6;"></div>
<div class="a" style="left:1315.3px;top:840.5px;width:2px;height:2px;background:#c6bca6;"></div>
<div class="a" style="left:1315.3px;top:844.5px;width:2px;height:2px;background:#c6bca6;"></div>
<div class="a" style="left:1315.3px;top:848.5px;width:2px;height:2px;background:#c6bca6;"></div>
<div class="a" style="left:1315.3px;top:852.5px;width:2px;height:2px;background:#c6bca6;"></div>
<svg class="a" style="left:-0.375px;top:0.525px;" width="20.75" height="20.75" viewBox="0 0 30 30"><circle cx="15" cy="15" r="10.6988" fill="#fff" stroke="#46bfc2" stroke-width="2.60241"/><path d="M13.200 16C15 17.500 17 18.500 19 18L19.300 15L20.300 17.500L21.300 15C21.800 18 21 21 20 23.500C17.500 24.800 13.500 24.800 11.200 23.800C12.200 21 13 18.500 13.200 16Z" fill="#3a2a22"/><ellipse cx="19" cy="11.200" rx="2.100" ry="1.300" transform="rotate(-15 19 11.200)" fill="#3a2a22"/><circle cx="13.300" cy="10" r=".8" fill="#55443c"/><path d="M7.600 11.400C6.600 13.500 6.600 16.500 7 18.600C7.600 16 8.600 13.600 9.400 11.600Z" fill="#4a3a32"/><path d="M10 10.200L13.400 7.200" stroke="#6a5a52" stroke-width=".6"/><rect x="17.600" y="18.800" width="1.400" height="1.300" fill="#fff"/></svg>
<svg class="a" style="left:254px;top:865px;" width="30" height="30" viewBox="0 0 30 30"><circle cx="15" cy="15" r="11" fill="#fff" stroke="#46bfc2" stroke-width="2"/><path d="M13.200 16C15 17.500 17 18.500 19 18L19.300 15L20.300 17.500L21.300 15C21.800 18 21 21 20 23.500C17.500 24.800 13.500 24.800 11.200 23.800C12.200 21 13 18.500 13.200 16Z" fill="#3a2a22"/><ellipse cx="19" cy="11.200" rx="2.100" ry="1.300" transform="rotate(-15 19 11.200)" fill="#3a2a22"/><circle cx="13.300" cy="10" r=".8" fill="#55443c"/><path d="M7.600 11.400C6.600 13.500 6.600 16.500 7 18.600C7.600 16 8.600 13.600 9.400 11.600Z" fill="#4a3a32"/><path d="M10 10.200L13.400 7.200" stroke="#6a5a52" stroke-width=".6"/><rect x="17.600" y="18.800" width="1.400" height="1.300" fill="#fff"/></svg>
<svg class="a" style="left:302.8px;top:865px;" width="30" height="30" viewBox="0 0 30 30"><circle cx="15" cy="15" r="11" fill="#fff" stroke="#46bfc2" stroke-width="2"/><path d="M13.200 16C15 17.500 17 18.500 19 18L19.300 15L20.300 17.500L21.300 15C21.800 18 21 21 20 23.500C17.500 24.800 13.500 24.800 11.200 23.800C12.200 21 13 18.500 13.200 16Z" fill="#3a2a22"/><ellipse cx="19" cy="11.200" rx="2.100" ry="1.300" transform="rotate(-15 19 11.200)" fill="#3a2a22"/><circle cx="13.300" cy="10" r=".8" fill="#55443c"/><path d="M7.600 11.400C6.600 13.500 6.600 16.500 7 18.600C7.600 16 8.600 13.600 9.400 11.600Z" fill="#4a3a32"/><path d="M10 10.200L13.400 7.200" stroke="#6a5a52" stroke-width=".6"/><rect x="17.600" y="18.800" width="1.400" height="1.300" fill="#fff"/></svg>
<svg class="a" style="left:1577.5px;top:50.5px;" width="15" height="15" viewBox="0 0 15 15"><circle cx="7.500" cy="7.500" r="7.200" fill="#e4d6c4"/><path d="M1.200 5.500C3 1.500 10 .2 13.600 4.200C10 3 5.500 3.500 3.600 7.500C3 9.500 3.200 11 3.800 12.400C1.500 11 .2 8 1.200 5.500Z" fill="#c9b8a4"/><path d="M4 8C5 5 9 4.200 12 5.500C14 7 14.200 10 13 12C11 14.500 7 15 4.600 13C3.600 11.600 3.400 9.600 4 8Z" fill="#9a7a68"/><path d="M6.400 10.500C8 11 9.600 11 11.200 10.200C11.600 12 11 13.600 9.600 14.400C8 14.900 6.600 14.400 6 13.400C6 12.400 6.200 11.400 6.400 10.500Z" fill="#2e201a"/><ellipse cx="9.700" cy="5.200" rx="1.200" ry=".8" fill="#2a1c16"/><circle cx="5.600" cy="4.800" r=".6" fill="#2a1c16"/><path d="M3.400 4.200C5 2.600 8 2.400 11 3.400" stroke="#fff" stroke-width="1" fill="none"/><rect x="9" y="11.400" width="1.300" height="1.200" fill="#fff"/><path d="M1.600 5.600C1.200 6.600 1.400 7.600 2 8.200" stroke="#3a2a22" stroke-width="1" fill="none"/></svg>
<svg class="a" style="left:156px;top:864px;" width="30" height="30" viewBox="0 0 30 30"><text x="3.600" y="26" font-family="Liberation Sans, sans-serif" font-weight="bold" font-size="40" fill="#38b6f1">e</text><ellipse cx="14.600" cy="15.600" rx="14" ry="4.800" transform="rotate(-42 14.600 15.600)" fill="none" stroke="#f6c411" stroke-width="1.800" stroke-dasharray="38 16 70" /></svg>
<svg class="a" style="left:209px;top:870.5px;" width="22" height="18.5" viewBox="0 0 22 18.5"><path d="M.6 1.600a1 1 0 0 1 1-1H7.600L9.200 2.400H20.600a.8 .8 0 0 1 .8 .8V17.600H.6Z" fill="#ffe48f"/><path d="M1 1H7.400L8.600 2.400H1Z" fill="#f5c84c"/><path d="M4.400 18V12.600a1.200 1.200 0 0 1 1.200-1.200H16.400a1.200 1.200 0 0 1 1.200 1.200V18H14.600V14.200H7.400V18Z" fill="#35a8ee"/><rect x=".6" y="17" width="20.800" height=".9" fill="#e8c55e"/></svg>
<svg class="a" style="left:1347px;top:875px;" width="14" height="9" viewBox="0 0 14 9"><path d="M1 8L7 2L13 8" stroke="#fff" stroke-width="1.400" fill="none"/></svg>
<svg class="a" style="left:1372.5px;top:871.5px;" width="14" height="18" viewBox="0 0 14 18"><rect x="3" y=".6" width="5" height="3.600" stroke="#fff" stroke-width="1" fill="none"/><rect x="4.300" y="1.800" width=".9" height=".9" fill="#fff"/><rect x="5.900" y="1.800" width=".9" height=".9" fill="#fff"/><path d="M1.600 4.400H9.400V14.600a1 1 0 0 1-1 1H2.600a1 1 0 0 1-1-1Z" stroke="#fff" stroke-width="1" fill="none"/><path d="M8.200 13.600L10 15.400L13.400 11.600" stroke="#bbb" stroke-width="1" fill="none"/></svg>
<svg class="a" style="left:1393.5px;top:873.5px;" width="18" height="15" viewBox="0 0 18 15"><rect x="3.600" y=".8" width="12.800" height="8.800" stroke="#fff" stroke-width="1.100" fill="#000"/><path d="M10 9.600V13M6 13.400H14" stroke="#fff" stroke-width="1.100"/><rect x=".6" y=".8" width="4.600" height="4" stroke="#fff" stroke-width="1" fill="#000"/><path d="M2.900 4.800V13.400H6" stroke="#fff" stroke-width="1" fill="none"/><rect x="2" y="2.200" width="1.800" height="1.200" fill="#fff"/></svg>
<svg class="a" style="left:1417.5px;top:872px;" width="18" height="16" viewBox="0 0 18 16"><path d="M.8 5.400H3.400L7 2V14L3.400 10.600H.8Z" stroke="#fff" stroke-width="1.100" fill="none"/><path d="M9.400 5.400C10.600 6.800 10.600 9.200 9.400 10.600M11.800 3.600C14 6 14 10 11.800 12.400M14.200 1.800C17.200 5.200 17.200 10.800 14.200 14.200" stroke="#fff" stroke-width="1.100" fill="none"/></svg>
<svg class="a" style="left:1558px;top:871px;" width="26" height="24" viewBox="0 0 26 24"><path d="M1.200 1.200H16.600V13.600H8.600L5.600 16.800V13.600H1.200Z" fill="#fff"/><path d="M3.400 4.200H14.400M3.400 6.800H14.400M3.400 9.400H14.400" stroke="#000" stroke-width=".9"/><circle cx="17.400" cy="15.400" r="6.400" fill="#2b2b2b" stroke="#000" stroke-width="1"/><text x="17.400" y="19" text-anchor="middle" font-family="Liberation Sans, sans-serif" font-size="10.500" font-weight="bold" fill="#fff">1</text></svg>
<div class="a" style="left:0;top:0;width:1600px;height:860px;overflow:hidden;pointer-events:none">
<div class="wm" style="left:0px;top:135px;letter-spacing:.5px">audit审计01(Audit1)</div>
<div class="wm" style="left:18px;top:152.5px;letter-spacing:.39px">audit-172.18.210.237</div>
<div class="wm" style="left:300px;top:135px;letter-spacing:.5px">audit审计01(Audit1)</div>
<div class="wm" style="left:318px;top:152.5px;letter-spacing:.39px">audit-172.18.210.237</div>
<div class="wm" style="left:600px;top:135px;letter-spacing:.5px">audit审计01(Audit1)</div>
<div class="wm" style="left:618px;top:152.5px;letter-spacing:.39px">audit-172.18.210.237</div>
<div class="wm" style="left:900px;top:135px;letter-spacing:.5px">audit审计01(Audit1)</div>
<div class="wm" style="left:918px;top:152.5px;letter-spacing:.39px">audit-172.18.210.237</div>
<div class="wm" style="left:1200px;top:135px;letter-spacing:.5px">audit审计01(Audit1)</div>
<div class="wm" style="left:1218px;top:152.5px;letter-spacing:.39px">audit-172.18.210.237</div>
<div class="wm" style="left:1500px;top:135px;letter-spacing:.5px">audit审计01(Audit1)</div>
<div class="wm" style="left:1518px;top:152.5px;letter-spacing:.39px">audit-172.18.210.237</div>
<div class="wm" style="left:0px;top:435px;letter-spacing:.5px">audit审计01(Audit1)</div>
<div class="wm" style="left:18px;top:452.5px;letter-spacing:.39px">audit-172.18.210.237</div>
<div class="wm" style="left:300px;top:435px;letter-spacing:.5px">audit审计01(Audit1)</div>
<div class="wm" style="left:318px;top:452.5px;letter-spacing:.39px">audit-172.18.210.237</div>
<div class="wm" style="left:600px;top:435px;letter-spacing:.5px">audit审计01(Audit1)</div>
<div class="wm" style="left:618px;top:452.5px;letter-spacing:.39px">audit-172.18.210.237</div>
<div class="wm" style="left:900px;top:435px;letter-spacing:.5px">audit审计01(Audit1)</div>
<div class="wm" style="left:918px;top:452.5px;letter-spacing:.39px">audit-172.18.210.237</div>
<div class="wm" style="left:1200px;top:435px;letter-spacing:.5px">audit审计01(Audit1)</div>
<div class="wm" style="left:1218px;top:452.5px;letter-spacing:.39px">audit-172.18.210.237</div>
<div class="wm" style="left:1500px;top:435px;letter-spacing:.5px">audit审计01(Audit1)</div>
<div class="wm" style="left:1518px;top:452.5px;letter-spacing:.39px">audit-172.18.210.237</div>
<div class="wm" style="left:0px;top:735px;letter-spacing:.5px">audit审计01(Audit1)</div>
<div class="wm" style="left:18px;top:752.5px;letter-spacing:.39px">audit-172.18.210.237</div>
<div class="wm" style="left:300px;top:735px;letter-spacing:.5px">audit审计01(Audit1)</div>
<div class="wm" style="left:318px;top:752.5px;letter-spacing:.39px">audit-172.18.210.237</div>
<div class="wm" style="left:600px;top:735px;letter-spacing:.5px">audit审计01(Audit1)</div>
<div class="wm" style="left:618px;top:752.5px;letter-spacing:.39px">audit-172.18.210.237</div>
<div class="wm" style="left:900px;top:735px;letter-spacing:.5px">audit审计01(Audit1)</div>
<div class="wm" style="left:918px;top:752.5px;letter-spacing:.39px">audit-172.18.210.237</div>
<div class="wm" style="left:1200px;top:735px;letter-spacing:.5px">audit审计01(Audit1)</div>
<div class="wm" style="left:1218px;top:752.5px;letter-spacing:.39px">audit-172.18.210.237</div>
<div class="wm" style="left:1500px;top:735px;letter-spacing:.5px">audit审计01(Audit1)</div>
<div class="wm" style="left:1518px;top:752.5px;letter-spacing:.39px">audit-172.18.210.237</div>
</div>
</body></html>
